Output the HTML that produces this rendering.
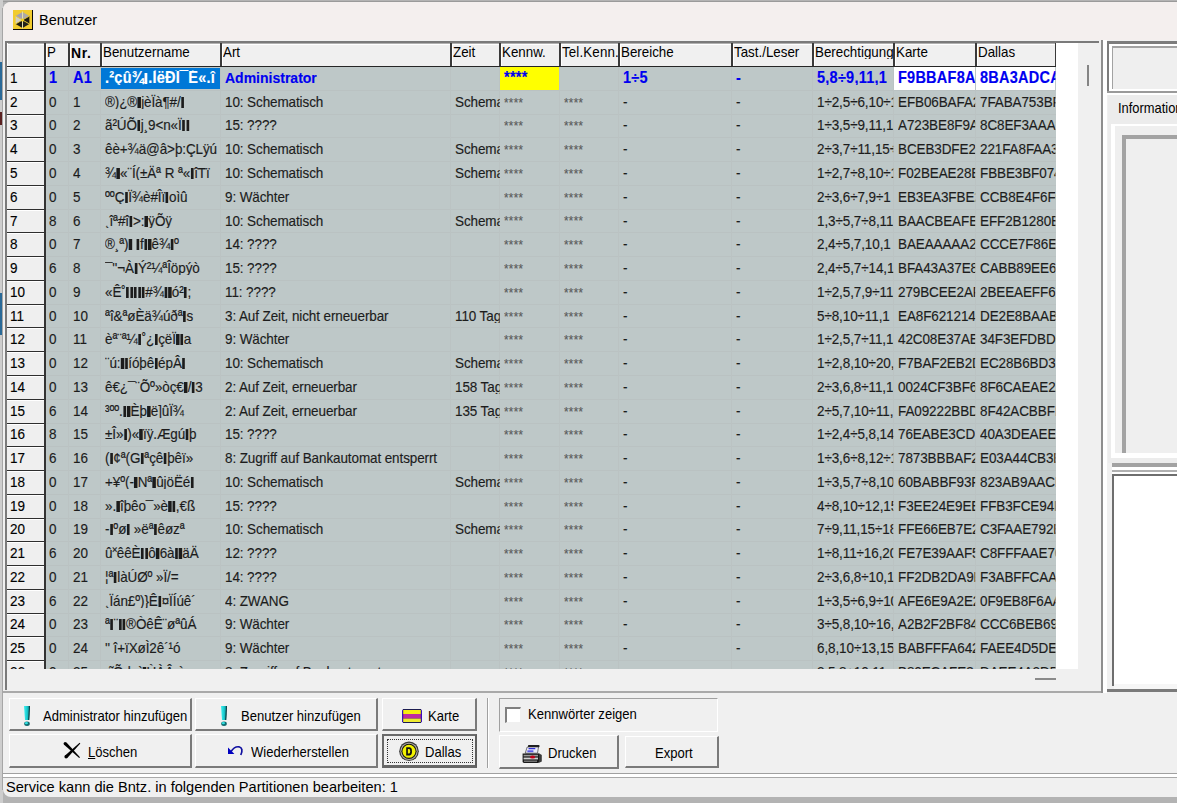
<!DOCTYPE html>
<html><head><meta charset="utf-8"><title>Benutzer</title><style>*{margin:0;padding:0;box-sizing:content-box}
html,body{width:1177px;height:803px;overflow:hidden;background:#b3b3b3}
body{position:relative;font-family:"Liberation Sans", sans-serif}
body div{position:absolute}
.t{white-space:nowrap}
.d{-webkit-text-stroke:0.15px currentColor}
i.b{display:inline-block;width:3.3px;height:11px;background:currentColor;vertical-align:-1px;margin:0 0.6px}
</style></head><body>
<div style="left:0px;top:0px;width:1177px;height:803px;background:#b3b3b3;"></div>
<div style="left:0px;top:1px;width:1177px;height:1px;background:#9a9a9a;"></div>
<div style="left:0px;top:0px;width:3px;height:803px;background:#cdcdcd;"></div>
<div style="left:0px;top:62px;width:3px;height:38px;background:#2a6a98;"></div>
<div style="left:0px;top:112px;width:3px;height:13px;background:#5a2020;"></div>
<div style="left:0px;top:293px;width:3px;height:42px;background:#2a6a98;"></div>
<div style="left:3px;top:2px;width:1200px;height:795px;background:#f0f0f0;border-radius:8px 0 0 8px;overflow:hidden;">
<div style="position:absolute;left:0;top:0;width:1200px;height:38px;background:#f4efee;"></div>
</div>
<div style="left:2px;top:8px;width:1px;height:782px;background:#a6a6a6;"></div>
<svg style="position:absolute;left:13px;top:10px" width="20" height="20" viewBox="0 0 20 20">
<rect x="0" y="0" width="19" height="19" fill="#f2cc2e"/>
<rect x="19" y="0" width="1" height="20" fill="#0a0a0a"/>
<rect x="0" y="19" width="20" height="1" fill="#0a0a0a"/>
<polygon points="9.5,10 9.5,2 2.6,6" fill="#a6a2b2"/>
<polygon points="9.5,10 9.5,2 16.4,6" fill="#aeaaa8"/>
<polygon points="9.5,10 2.6,6 2.6,14" fill="#d4d0c0"/>
<polygon points="9.5,10 16.4,6 16.4,14" fill="#1e1c14"/>
<polygon points="9.5,10 2.6,14 9.5,18" fill="#1a1a14"/>
<polygon points="9.5,10 16.4,14 9.5,18" fill="#22221a"/>
<line x1="9.5" y1="1.5" x2="9.5" y2="18.5" stroke="#e6e0a8" stroke-width="1"/>
<line x1="2.5" y1="14" x2="16.5" y2="6" stroke="#e8c838" stroke-width="0.9"/>
<line x1="2.5" y1="6" x2="16.5" y2="14" stroke="#e8c838" stroke-width="0.9"/>
<circle cx="9.5" cy="10" r="1.6" fill="#f4d020"/>
</svg>
<div class="t" style="left:39px;top:13.13px;font-size:14.5px;line-height:14.5px;color:#000;">Benutzer</div>
<div style="left:5px;top:41px;width:1094px;height:2px;background:#7a7a7a;"></div>
<div style="left:5px;top:41px;width:2px;height:649px;background:#7a7a7a;"></div>
<div style="left:7px;top:43px;width:1091px;height:646px;background:#f0f0f0;"></div>
<div style="left:3px;top:691px;width:1100px;height:2px;background:#a9a9a9;"></div>
<div style="left:1101px;top:40px;width:2px;height:653px;background:#8e8e8e;"></div>
<div style="left:1103px;top:40px;width:4px;height:653px;background:#ffffff;"></div>
<div style="left:7px;top:43px;width:1049px;height:1px;background:#b0b0b0;"></div>
<div style="left:7px;top:44px;width:1049px;height:1px;background:#ffffff;"></div>
<div style="left:7px;top:43px;width:1px;height:23px;background:#ffffff;"></div>
<div style="left:44px;top:43px;width:2px;height:23px;background:#3a3a3a;"></div>
<div style="left:46px;top:44px;width:1px;height:22px;background:#ffffff;"></div>
<div style="left:68px;top:43px;width:2px;height:23px;background:#3a3a3a;"></div>
<div style="left:70px;top:44px;width:1px;height:22px;background:#ffffff;"></div>
<div style="left:100px;top:43px;width:2px;height:23px;background:#3a3a3a;"></div>
<div style="left:102px;top:44px;width:1px;height:22px;background:#ffffff;"></div>
<div style="left:220px;top:43px;width:2px;height:23px;background:#3a3a3a;"></div>
<div style="left:222px;top:44px;width:1px;height:22px;background:#ffffff;"></div>
<div style="left:450px;top:43px;width:2px;height:23px;background:#3a3a3a;"></div>
<div style="left:452px;top:44px;width:1px;height:22px;background:#ffffff;"></div>
<div style="left:499px;top:43px;width:2px;height:23px;background:#3a3a3a;"></div>
<div style="left:501px;top:44px;width:1px;height:22px;background:#ffffff;"></div>
<div style="left:559px;top:43px;width:2px;height:23px;background:#3a3a3a;"></div>
<div style="left:561px;top:44px;width:1px;height:22px;background:#ffffff;"></div>
<div style="left:618px;top:43px;width:2px;height:23px;background:#3a3a3a;"></div>
<div style="left:620px;top:44px;width:1px;height:22px;background:#ffffff;"></div>
<div style="left:731px;top:43px;width:2px;height:23px;background:#3a3a3a;"></div>
<div style="left:733px;top:44px;width:1px;height:22px;background:#ffffff;"></div>
<div style="left:812px;top:43px;width:2px;height:23px;background:#3a3a3a;"></div>
<div style="left:814px;top:44px;width:1px;height:22px;background:#ffffff;"></div>
<div style="left:893px;top:43px;width:2px;height:23px;background:#3a3a3a;"></div>
<div style="left:895px;top:44px;width:1px;height:22px;background:#ffffff;"></div>
<div style="left:975px;top:43px;width:2px;height:23px;background:#3a3a3a;"></div>
<div style="left:977px;top:44px;width:1px;height:22px;background:#ffffff;"></div>
<div style="left:1055px;top:43px;width:2px;height:23px;background:#3a3a3a;"></div>
<div style="left:1057px;top:44px;width:1px;height:22px;background:#ffffff;"></div>
<div class="t" style="left:46.5px;top:44.93px;font-size:14.5px;line-height:14.5px;color:#000;width:22.82608695652174px;overflow:hidden;transform:scaleX(0.92);transform-origin:0 0;">P</div>
<div class="t" style="left:71px;top:45.85px;font-size:14px;line-height:14px;color:#000;width:29px;overflow:hidden;font-weight:bold;letter-spacing:0.6px;">Nr.</div>
<div class="t" style="left:102.5px;top:44.93px;font-size:14.5px;line-height:14.5px;color:#000;width:127.17391304347825px;overflow:hidden;transform:scaleX(0.92);transform-origin:0 0;">Benutzername</div>
<div class="t" style="left:222.5px;top:44.93px;font-size:14.5px;line-height:14.5px;color:#000;width:246.7391304347826px;overflow:hidden;transform:scaleX(0.92);transform-origin:0 0;">Art</div>
<div class="t" style="left:452.5px;top:44.93px;font-size:14.5px;line-height:14.5px;color:#000;width:50.0px;overflow:hidden;transform:scaleX(0.92);transform-origin:0 0;">Zeit</div>
<div class="t" style="left:501.5px;top:44.93px;font-size:14.5px;line-height:14.5px;color:#000;width:61.95652173913043px;overflow:hidden;transform:scaleX(0.92);transform-origin:0 0;">Kennw.</div>
<div class="t" style="left:561.5px;top:44.93px;font-size:14.5px;line-height:14.5px;color:#000;letter-spacing:0.15px;transform:scaleX(0.92);transform-origin:0 0;">Tel.Kenn.</div>
<div class="t" style="left:620.5px;top:44.93px;font-size:14.5px;line-height:14.5px;color:#000;width:119.56521739130434px;overflow:hidden;transform:scaleX(0.92);transform-origin:0 0;">Bereiche</div>
<div class="t" style="left:733.5px;top:44.93px;font-size:14.5px;line-height:14.5px;color:#000;width:84.78260869565217px;overflow:hidden;transform:scaleX(0.92);transform-origin:0 0;">Tast./Leser</div>
<div class="t" style="left:814.5px;top:44.93px;font-size:14.5px;line-height:14.5px;color:#000;width:88.04347826086956px;overflow:hidden;transform:scaleX(0.92);transform-origin:0 0;">Berechtigung</div>
<div class="t" style="left:895.5px;top:44.93px;font-size:14.5px;line-height:14.5px;color:#000;width:85.8695652173913px;overflow:hidden;transform:scaleX(0.92);transform-origin:0 0;">Karte</div>
<div class="t" style="left:977.5px;top:44.93px;font-size:14.5px;line-height:14.5px;color:#000;width:83.69565217391305px;overflow:hidden;transform:scaleX(0.92);transform-origin:0 0;">Dallas</div>
<div style="left:7px;top:66px;width:1049px;height:1px;background:#262626;"></div>
<div style="left:46px;top:67px;width:1010px;height:602px;background:#bec8c8;"></div>
<div style="left:46px;top:90px;width:1010px;height:1px;background:#bac2c2;"></div>
<div style="left:46px;top:114px;width:1010px;height:1px;background:#bac2c2;"></div>
<div style="left:46px;top:137px;width:1010px;height:1px;background:#bac2c2;"></div>
<div style="left:46px;top:161px;width:1010px;height:1px;background:#bac2c2;"></div>
<div style="left:46px;top:185px;width:1010px;height:1px;background:#bac2c2;"></div>
<div style="left:46px;top:209px;width:1010px;height:1px;background:#bac2c2;"></div>
<div style="left:46px;top:232px;width:1010px;height:1px;background:#bac2c2;"></div>
<div style="left:46px;top:256px;width:1010px;height:1px;background:#bac2c2;"></div>
<div style="left:46px;top:280px;width:1010px;height:1px;background:#bac2c2;"></div>
<div style="left:46px;top:304px;width:1010px;height:1px;background:#bac2c2;"></div>
<div style="left:46px;top:327px;width:1010px;height:1px;background:#bac2c2;"></div>
<div style="left:46px;top:351px;width:1010px;height:1px;background:#bac2c2;"></div>
<div style="left:46px;top:375px;width:1010px;height:1px;background:#bac2c2;"></div>
<div style="left:46px;top:399px;width:1010px;height:1px;background:#bac2c2;"></div>
<div style="left:46px;top:423px;width:1010px;height:1px;background:#bac2c2;"></div>
<div style="left:46px;top:446px;width:1010px;height:1px;background:#bac2c2;"></div>
<div style="left:46px;top:470px;width:1010px;height:1px;background:#bac2c2;"></div>
<div style="left:46px;top:494px;width:1010px;height:1px;background:#bac2c2;"></div>
<div style="left:46px;top:518px;width:1010px;height:1px;background:#bac2c2;"></div>
<div style="left:46px;top:541px;width:1010px;height:1px;background:#bac2c2;"></div>
<div style="left:46px;top:565px;width:1010px;height:1px;background:#bac2c2;"></div>
<div style="left:46px;top:589px;width:1010px;height:1px;background:#bac2c2;"></div>
<div style="left:46px;top:613px;width:1010px;height:1px;background:#bac2c2;"></div>
<div style="left:46px;top:636px;width:1010px;height:1px;background:#bac2c2;"></div>
<div style="left:46px;top:660px;width:1010px;height:1px;background:#bac2c2;"></div>
<div style="left:68px;top:67px;width:1px;height:602px;background:#bbc3c3;"></div>
<div style="left:100px;top:67px;width:1px;height:602px;background:#bbc3c3;"></div>
<div style="left:220px;top:67px;width:1px;height:602px;background:#bbc3c3;"></div>
<div style="left:450px;top:67px;width:1px;height:602px;background:#bbc3c3;"></div>
<div style="left:499px;top:67px;width:1px;height:602px;background:#bbc3c3;"></div>
<div style="left:559px;top:67px;width:1px;height:602px;background:#bbc3c3;"></div>
<div style="left:618px;top:67px;width:1px;height:602px;background:#bbc3c3;"></div>
<div style="left:731px;top:67px;width:1px;height:602px;background:#bbc3c3;"></div>
<div style="left:812px;top:67px;width:1px;height:602px;background:#bbc3c3;"></div>
<div style="left:893px;top:67px;width:1px;height:602px;background:#bbc3c3;"></div>
<div style="left:975px;top:67px;width:1px;height:602px;background:#bbc3c3;"></div>
<div style="left:1056px;top:43px;width:22px;height:626px;background:#ffffff;"></div>
<div style="left:1078px;top:43px;width:20px;height:646px;background:#f0f0f0;"></div>
<div style="left:1087px;top:65px;width:2px;height:21px;background:#858585;"></div>
<div style="left:1035px;top:678px;width:21px;height:2px;background:#8a8a8a;"></div>
<div style="left:7px;top:67px;width:37px;height:23px;background:#efefef;"></div>
<div style="left:7px;top:67px;width:37px;height:1px;background:#ffffff;"></div>
<div style="left:7px;top:90px;width:37px;height:1px;background:#2e2e2e;"></div>
<div style="left:7px;top:91px;width:37px;height:0px;background:#777;"></div>
<div style="left:7px;top:91px;width:37px;height:23px;background:#efefef;"></div>
<div style="left:7px;top:91px;width:37px;height:1px;background:#ffffff;"></div>
<div style="left:7px;top:114px;width:37px;height:1px;background:#2e2e2e;"></div>
<div style="left:7px;top:115px;width:37px;height:0px;background:#777;"></div>
<div style="left:7px;top:115px;width:37px;height:22px;background:#efefef;"></div>
<div style="left:7px;top:115px;width:37px;height:1px;background:#ffffff;"></div>
<div style="left:7px;top:137px;width:37px;height:1px;background:#2e2e2e;"></div>
<div style="left:7px;top:138px;width:37px;height:0px;background:#777;"></div>
<div style="left:7px;top:138px;width:37px;height:23px;background:#efefef;"></div>
<div style="left:7px;top:138px;width:37px;height:1px;background:#ffffff;"></div>
<div style="left:7px;top:161px;width:37px;height:1px;background:#2e2e2e;"></div>
<div style="left:7px;top:162px;width:37px;height:0px;background:#777;"></div>
<div style="left:7px;top:162px;width:37px;height:23px;background:#efefef;"></div>
<div style="left:7px;top:162px;width:37px;height:1px;background:#ffffff;"></div>
<div style="left:7px;top:185px;width:37px;height:1px;background:#2e2e2e;"></div>
<div style="left:7px;top:186px;width:37px;height:0px;background:#777;"></div>
<div style="left:7px;top:186px;width:37px;height:23px;background:#efefef;"></div>
<div style="left:7px;top:186px;width:37px;height:1px;background:#ffffff;"></div>
<div style="left:7px;top:209px;width:37px;height:1px;background:#2e2e2e;"></div>
<div style="left:7px;top:210px;width:37px;height:0px;background:#777;"></div>
<div style="left:7px;top:210px;width:37px;height:22px;background:#efefef;"></div>
<div style="left:7px;top:210px;width:37px;height:1px;background:#ffffff;"></div>
<div style="left:7px;top:232px;width:37px;height:1px;background:#2e2e2e;"></div>
<div style="left:7px;top:233px;width:37px;height:0px;background:#777;"></div>
<div style="left:7px;top:233px;width:37px;height:23px;background:#efefef;"></div>
<div style="left:7px;top:233px;width:37px;height:1px;background:#ffffff;"></div>
<div style="left:7px;top:256px;width:37px;height:1px;background:#2e2e2e;"></div>
<div style="left:7px;top:257px;width:37px;height:0px;background:#777;"></div>
<div style="left:7px;top:257px;width:37px;height:23px;background:#efefef;"></div>
<div style="left:7px;top:257px;width:37px;height:1px;background:#ffffff;"></div>
<div style="left:7px;top:280px;width:37px;height:1px;background:#2e2e2e;"></div>
<div style="left:7px;top:281px;width:37px;height:0px;background:#777;"></div>
<div style="left:7px;top:281px;width:37px;height:23px;background:#efefef;"></div>
<div style="left:7px;top:281px;width:37px;height:1px;background:#ffffff;"></div>
<div style="left:7px;top:304px;width:37px;height:1px;background:#2e2e2e;"></div>
<div style="left:7px;top:305px;width:37px;height:0px;background:#777;"></div>
<div style="left:7px;top:305px;width:37px;height:22px;background:#efefef;"></div>
<div style="left:7px;top:305px;width:37px;height:1px;background:#ffffff;"></div>
<div style="left:7px;top:327px;width:37px;height:1px;background:#2e2e2e;"></div>
<div style="left:7px;top:328px;width:37px;height:0px;background:#777;"></div>
<div style="left:7px;top:328px;width:37px;height:23px;background:#efefef;"></div>
<div style="left:7px;top:328px;width:37px;height:1px;background:#ffffff;"></div>
<div style="left:7px;top:351px;width:37px;height:1px;background:#2e2e2e;"></div>
<div style="left:7px;top:352px;width:37px;height:0px;background:#777;"></div>
<div style="left:7px;top:352px;width:37px;height:23px;background:#efefef;"></div>
<div style="left:7px;top:352px;width:37px;height:1px;background:#ffffff;"></div>
<div style="left:7px;top:375px;width:37px;height:1px;background:#2e2e2e;"></div>
<div style="left:7px;top:376px;width:37px;height:0px;background:#777;"></div>
<div style="left:7px;top:376px;width:37px;height:23px;background:#efefef;"></div>
<div style="left:7px;top:376px;width:37px;height:1px;background:#ffffff;"></div>
<div style="left:7px;top:399px;width:37px;height:1px;background:#2e2e2e;"></div>
<div style="left:7px;top:400px;width:37px;height:0px;background:#777;"></div>
<div style="left:7px;top:400px;width:37px;height:23px;background:#efefef;"></div>
<div style="left:7px;top:400px;width:37px;height:1px;background:#ffffff;"></div>
<div style="left:7px;top:423px;width:37px;height:1px;background:#2e2e2e;"></div>
<div style="left:7px;top:424px;width:37px;height:0px;background:#777;"></div>
<div style="left:7px;top:424px;width:37px;height:22px;background:#efefef;"></div>
<div style="left:7px;top:424px;width:37px;height:1px;background:#ffffff;"></div>
<div style="left:7px;top:446px;width:37px;height:1px;background:#2e2e2e;"></div>
<div style="left:7px;top:447px;width:37px;height:0px;background:#777;"></div>
<div style="left:7px;top:447px;width:37px;height:23px;background:#efefef;"></div>
<div style="left:7px;top:447px;width:37px;height:1px;background:#ffffff;"></div>
<div style="left:7px;top:470px;width:37px;height:1px;background:#2e2e2e;"></div>
<div style="left:7px;top:471px;width:37px;height:0px;background:#777;"></div>
<div style="left:7px;top:471px;width:37px;height:23px;background:#efefef;"></div>
<div style="left:7px;top:471px;width:37px;height:1px;background:#ffffff;"></div>
<div style="left:7px;top:494px;width:37px;height:1px;background:#2e2e2e;"></div>
<div style="left:7px;top:495px;width:37px;height:0px;background:#777;"></div>
<div style="left:7px;top:495px;width:37px;height:23px;background:#efefef;"></div>
<div style="left:7px;top:495px;width:37px;height:1px;background:#ffffff;"></div>
<div style="left:7px;top:518px;width:37px;height:1px;background:#2e2e2e;"></div>
<div style="left:7px;top:519px;width:37px;height:0px;background:#777;"></div>
<div style="left:7px;top:519px;width:37px;height:22px;background:#efefef;"></div>
<div style="left:7px;top:519px;width:37px;height:1px;background:#ffffff;"></div>
<div style="left:7px;top:541px;width:37px;height:1px;background:#2e2e2e;"></div>
<div style="left:7px;top:542px;width:37px;height:0px;background:#777;"></div>
<div style="left:7px;top:542px;width:37px;height:23px;background:#efefef;"></div>
<div style="left:7px;top:542px;width:37px;height:1px;background:#ffffff;"></div>
<div style="left:7px;top:565px;width:37px;height:1px;background:#2e2e2e;"></div>
<div style="left:7px;top:566px;width:37px;height:0px;background:#777;"></div>
<div style="left:7px;top:566px;width:37px;height:23px;background:#efefef;"></div>
<div style="left:7px;top:566px;width:37px;height:1px;background:#ffffff;"></div>
<div style="left:7px;top:589px;width:37px;height:1px;background:#2e2e2e;"></div>
<div style="left:7px;top:590px;width:37px;height:0px;background:#777;"></div>
<div style="left:7px;top:590px;width:37px;height:23px;background:#efefef;"></div>
<div style="left:7px;top:590px;width:37px;height:1px;background:#ffffff;"></div>
<div style="left:7px;top:613px;width:37px;height:1px;background:#2e2e2e;"></div>
<div style="left:7px;top:614px;width:37px;height:0px;background:#777;"></div>
<div style="left:7px;top:614px;width:37px;height:22px;background:#efefef;"></div>
<div style="left:7px;top:614px;width:37px;height:1px;background:#ffffff;"></div>
<div style="left:7px;top:636px;width:37px;height:1px;background:#2e2e2e;"></div>
<div style="left:7px;top:637px;width:37px;height:0px;background:#777;"></div>
<div style="left:7px;top:637px;width:37px;height:23px;background:#efefef;"></div>
<div style="left:7px;top:637px;width:37px;height:1px;background:#ffffff;"></div>
<div style="left:7px;top:660px;width:37px;height:1px;background:#2e2e2e;"></div>
<div style="left:7px;top:661px;width:37px;height:0px;background:#777;"></div>
<div style="left:7px;top:661px;width:37px;height:8px;background:#efefef;"></div>
<div style="left:7px;top:661px;width:37px;height:1px;background:#ffffff;"></div>
<div style="left:44px;top:67px;width:2px;height:602px;background:#333333;"></div>
<div style="left:7px;top:67px;width:1049px;height:602px;overflow:hidden;">
<div style="left:94px;top:1px;width:119px;height:21px;background:#0078d7;"></div>
<div style="left:493px;top:0px;width:59px;height:23px;background:#ffff00;"></div>
<div style="left:887px;top:0px;width:81px;height:23px;background:#ffffff;"></div>
<div style="left:969px;top:0px;width:79px;height:23px;background:#ffffff;"></div>
<div class="t d" style="left:3px;top:2.97px;font-size:15.39px;line-height:15.39px;color:#000;letter-spacing:-0.114px;transform:scaleX(0.877);transform-origin:0 0;">1</div>
<div class="t d" style="left:41.5px;top:2.66px;font-size:15.76px;line-height:15.76px;color:#0000f0;width:21.20px;overflow:hidden;letter-spacing:0.272px;transform:scaleX(0.92);transform-origin:0 0;font-weight:bold;">1</div>
<div class="t d" style="left:65.5px;top:2.66px;font-size:15.76px;line-height:15.76px;color:#0000f0;width:29.89px;overflow:hidden;letter-spacing:0.272px;transform:scaleX(0.92);transform-origin:0 0;font-weight:bold;">A1</div>
<div class="t d" style="left:97.5px;top:2.66px;font-size:15.76px;line-height:15.76px;color:#ffffff;width:125.54px;overflow:hidden;letter-spacing:0.272px;transform:scaleX(0.92);transform-origin:0 0;font-weight:bold;">.²çû¾<i class="b"></i>.ÌëÐÎ¯É«.î</div>
<div class="t d" style="left:217.5px;top:3.12px;font-size:15.22px;line-height:15.22px;color:#0000f0;width:245.11px;overflow:hidden;letter-spacing:0.000px;transform:scaleX(0.92);transform-origin:0 0;font-weight:bold;">Administrator</div>
<div class="t d" style="left:496.5px;top:2.66px;font-size:15.76px;line-height:15.76px;color:#0000f0;width:60.33px;overflow:hidden;letter-spacing:0.272px;transform:scaleX(0.92);transform-origin:0 0;font-weight:bold;">****</div>
<div class="t d" style="left:615.5px;top:2.66px;font-size:15.76px;line-height:15.76px;color:#0000f0;width:117.93px;overflow:hidden;letter-spacing:0.272px;transform:scaleX(0.92);transform-origin:0 0;font-weight:bold;">1÷5</div>
<div class="t d" style="left:728.5px;top:2.66px;font-size:15.76px;line-height:15.76px;color:#0000f0;width:83.15px;overflow:hidden;letter-spacing:0.272px;transform:scaleX(0.92);transform-origin:0 0;font-weight:bold;">-</div>
<div class="t d" style="left:809.5px;top:2.66px;font-size:15.76px;line-height:15.76px;color:#0000f0;width:83.15px;overflow:hidden;letter-spacing:0.272px;transform:scaleX(0.92);transform-origin:0 0;font-weight:bold;">5,8÷9,11,1</div>
<div class="t d" style="left:890.5px;top:2.66px;font-size:15.76px;line-height:15.76px;color:#0000f0;width:84.24px;overflow:hidden;letter-spacing:0.272px;transform:scaleX(0.92);transform-origin:0 0;font-weight:bold;">F9BBAF8A</div>
<div class="t d" style="left:972.5px;top:2.66px;font-size:15.76px;line-height:15.76px;color:#0000f0;width:82.07px;overflow:hidden;letter-spacing:0.272px;transform:scaleX(0.92);transform-origin:0 0;font-weight:bold;">8BA3ADCA</div>
<div class="t d" style="left:3px;top:26.73px;font-size:15.39px;line-height:15.39px;color:#000;letter-spacing:-0.114px;transform:scaleX(0.877);transform-origin:0 0;">2</div>
<div class="t d" style="left:41.5px;top:26.73px;font-size:15.39px;line-height:15.39px;color:#1c1c1c;width:22.23px;overflow:hidden;letter-spacing:-0.114px;transform:scaleX(0.877);transform-origin:0 0;">0</div>
<div class="t d" style="left:65.5px;top:26.73px;font-size:15.39px;line-height:15.39px;color:#1c1c1c;width:31.36px;overflow:hidden;letter-spacing:-0.114px;transform:scaleX(0.877);transform-origin:0 0;">1</div>
<div class="t d" style="left:97.5px;top:26.73px;font-size:15.39px;line-height:15.39px;color:#1c1c1c;width:131.70px;overflow:hidden;letter-spacing:-0.114px;transform:scaleX(0.877);transform-origin:0 0;">®)¿®<i class="b"></i>jèÏà¶#/<i class="b"></i></div>
<div class="t d" style="left:217.5px;top:26.73px;font-size:15.39px;line-height:15.39px;color:#1c1c1c;width:257.13px;overflow:hidden;letter-spacing:-0.114px;transform:scaleX(0.877);transform-origin:0 0;">10: Schematisch</div>
<div class="t d" style="left:447.5px;top:26.73px;font-size:15.39px;line-height:15.39px;color:#1c1c1c;width:50.74px;overflow:hidden;letter-spacing:-0.114px;transform:scaleX(0.877);transform-origin:0 0;">Schema</div>
<div class="t d" style="left:496.5px;top:28.66px;font-size:13.11px;line-height:13.11px;color:#5a5a5a;width:63.28px;overflow:hidden;letter-spacing:0.456px;transform:scaleX(0.877);transform-origin:0 0;">****</div>
<div class="t d" style="left:556.5px;top:28.66px;font-size:13.11px;line-height:13.11px;color:#5a5a5a;width:62.14px;overflow:hidden;letter-spacing:0.456px;transform:scaleX(0.877);transform-origin:0 0;">****</div>
<div class="t d" style="left:615.5px;top:26.73px;font-size:15.39px;line-height:15.39px;color:#1c1c1c;width:123.72px;overflow:hidden;letter-spacing:-0.114px;transform:scaleX(0.877);transform-origin:0 0;">-</div>
<div class="t d" style="left:728.5px;top:26.73px;font-size:15.39px;line-height:15.39px;color:#1c1c1c;width:87.23px;overflow:hidden;letter-spacing:-0.114px;transform:scaleX(0.877);transform-origin:0 0;">-</div>
<div class="t d" style="left:809.5px;top:26.73px;font-size:15.39px;line-height:15.39px;color:#1c1c1c;width:87.23px;overflow:hidden;letter-spacing:-0.114px;transform:scaleX(0.877);transform-origin:0 0;">1÷2,5÷6,10÷1</div>
<div class="t d" style="left:890.5px;top:26.73px;font-size:15.39px;line-height:15.39px;color:#1c1c1c;width:88.37px;overflow:hidden;letter-spacing:-0.114px;transform:scaleX(0.877);transform-origin:0 0;">EFB06BAFA2</div>
<div class="t d" style="left:972.5px;top:26.73px;font-size:15.39px;line-height:15.39px;color:#1c1c1c;width:86.09px;overflow:hidden;letter-spacing:-0.114px;transform:scaleX(0.877);transform-origin:0 0;">7FABA753BF</div>
<div class="t d" style="left:3px;top:50.49px;font-size:15.39px;line-height:15.39px;color:#000;letter-spacing:-0.114px;transform:scaleX(0.877);transform-origin:0 0;">3</div>
<div class="t d" style="left:41.5px;top:50.49px;font-size:15.39px;line-height:15.39px;color:#1c1c1c;width:22.23px;overflow:hidden;letter-spacing:-0.114px;transform:scaleX(0.877);transform-origin:0 0;">0</div>
<div class="t d" style="left:65.5px;top:50.49px;font-size:15.39px;line-height:15.39px;color:#1c1c1c;width:31.36px;overflow:hidden;letter-spacing:-0.114px;transform:scaleX(0.877);transform-origin:0 0;">2</div>
<div class="t d" style="left:97.5px;top:50.49px;font-size:15.39px;line-height:15.39px;color:#1c1c1c;width:131.70px;overflow:hidden;letter-spacing:-0.114px;transform:scaleX(0.877);transform-origin:0 0;">ã²ÚÕ<i class="b"></i>j¸9&lt;n«Ï<i class="b"></i><i class="b"></i></div>
<div class="t d" style="left:217.5px;top:50.49px;font-size:15.39px;line-height:15.39px;color:#1c1c1c;width:257.13px;overflow:hidden;letter-spacing:-0.114px;transform:scaleX(0.877);transform-origin:0 0;">15: ????</div>
<div class="t d" style="left:496.5px;top:52.42px;font-size:13.11px;line-height:13.11px;color:#5a5a5a;width:63.28px;overflow:hidden;letter-spacing:0.456px;transform:scaleX(0.877);transform-origin:0 0;">****</div>
<div class="t d" style="left:556.5px;top:52.42px;font-size:13.11px;line-height:13.11px;color:#5a5a5a;width:62.14px;overflow:hidden;letter-spacing:0.456px;transform:scaleX(0.877);transform-origin:0 0;">****</div>
<div class="t d" style="left:615.5px;top:50.49px;font-size:15.39px;line-height:15.39px;color:#1c1c1c;width:123.72px;overflow:hidden;letter-spacing:-0.114px;transform:scaleX(0.877);transform-origin:0 0;">-</div>
<div class="t d" style="left:728.5px;top:50.49px;font-size:15.39px;line-height:15.39px;color:#1c1c1c;width:87.23px;overflow:hidden;letter-spacing:-0.114px;transform:scaleX(0.877);transform-origin:0 0;">-</div>
<div class="t d" style="left:809.5px;top:50.49px;font-size:15.39px;line-height:15.39px;color:#1c1c1c;width:87.23px;overflow:hidden;letter-spacing:-0.114px;transform:scaleX(0.877);transform-origin:0 0;">1÷3,5÷9,11,1</div>
<div class="t d" style="left:890.5px;top:50.49px;font-size:15.39px;line-height:15.39px;color:#1c1c1c;width:88.37px;overflow:hidden;letter-spacing:-0.114px;transform:scaleX(0.877);transform-origin:0 0;">A723BE8F9A</div>
<div class="t d" style="left:972.5px;top:50.49px;font-size:15.39px;line-height:15.39px;color:#1c1c1c;width:86.09px;overflow:hidden;letter-spacing:-0.114px;transform:scaleX(0.877);transform-origin:0 0;">8C8EF3AAA2</div>
<div class="t d" style="left:3px;top:74.25px;font-size:15.39px;line-height:15.39px;color:#000;letter-spacing:-0.114px;transform:scaleX(0.877);transform-origin:0 0;">4</div>
<div class="t d" style="left:41.5px;top:74.25px;font-size:15.39px;line-height:15.39px;color:#1c1c1c;width:22.23px;overflow:hidden;letter-spacing:-0.114px;transform:scaleX(0.877);transform-origin:0 0;">0</div>
<div class="t d" style="left:65.5px;top:74.25px;font-size:15.39px;line-height:15.39px;color:#1c1c1c;width:31.36px;overflow:hidden;letter-spacing:-0.114px;transform:scaleX(0.877);transform-origin:0 0;">3</div>
<div class="t d" style="left:97.5px;top:74.25px;font-size:15.39px;line-height:15.39px;color:#1c1c1c;width:131.70px;overflow:hidden;letter-spacing:-0.114px;transform:scaleX(0.877);transform-origin:0 0;">êè+¾ä@â&gt;þ:ÇLÿú</div>
<div class="t d" style="left:217.5px;top:74.25px;font-size:15.39px;line-height:15.39px;color:#1c1c1c;width:257.13px;overflow:hidden;letter-spacing:-0.114px;transform:scaleX(0.877);transform-origin:0 0;">10: Schematisch</div>
<div class="t d" style="left:447.5px;top:74.25px;font-size:15.39px;line-height:15.39px;color:#1c1c1c;width:50.74px;overflow:hidden;letter-spacing:-0.114px;transform:scaleX(0.877);transform-origin:0 0;">Schema</div>
<div class="t d" style="left:496.5px;top:76.18px;font-size:13.11px;line-height:13.11px;color:#5a5a5a;width:63.28px;overflow:hidden;letter-spacing:0.456px;transform:scaleX(0.877);transform-origin:0 0;">****</div>
<div class="t d" style="left:556.5px;top:76.18px;font-size:13.11px;line-height:13.11px;color:#5a5a5a;width:62.14px;overflow:hidden;letter-spacing:0.456px;transform:scaleX(0.877);transform-origin:0 0;">****</div>
<div class="t d" style="left:615.5px;top:74.25px;font-size:15.39px;line-height:15.39px;color:#1c1c1c;width:123.72px;overflow:hidden;letter-spacing:-0.114px;transform:scaleX(0.877);transform-origin:0 0;">-</div>
<div class="t d" style="left:728.5px;top:74.25px;font-size:15.39px;line-height:15.39px;color:#1c1c1c;width:87.23px;overflow:hidden;letter-spacing:-0.114px;transform:scaleX(0.877);transform-origin:0 0;">-</div>
<div class="t d" style="left:809.5px;top:74.25px;font-size:15.39px;line-height:15.39px;color:#1c1c1c;width:87.23px;overflow:hidden;letter-spacing:-0.114px;transform:scaleX(0.877);transform-origin:0 0;">2÷3,7÷11,15÷</div>
<div class="t d" style="left:890.5px;top:74.25px;font-size:15.39px;line-height:15.39px;color:#1c1c1c;width:88.37px;overflow:hidden;letter-spacing:-0.114px;transform:scaleX(0.877);transform-origin:0 0;">BCEB3DFE2</div>
<div class="t d" style="left:972.5px;top:74.25px;font-size:15.39px;line-height:15.39px;color:#1c1c1c;width:86.09px;overflow:hidden;letter-spacing:-0.114px;transform:scaleX(0.877);transform-origin:0 0;">221FA8FAA3</div>
<div class="t d" style="left:3px;top:98.01px;font-size:15.39px;line-height:15.39px;color:#000;letter-spacing:-0.114px;transform:scaleX(0.877);transform-origin:0 0;">5</div>
<div class="t d" style="left:41.5px;top:98.01px;font-size:15.39px;line-height:15.39px;color:#1c1c1c;width:22.23px;overflow:hidden;letter-spacing:-0.114px;transform:scaleX(0.877);transform-origin:0 0;">0</div>
<div class="t d" style="left:65.5px;top:98.01px;font-size:15.39px;line-height:15.39px;color:#1c1c1c;width:31.36px;overflow:hidden;letter-spacing:-0.114px;transform:scaleX(0.877);transform-origin:0 0;">4</div>
<div class="t d" style="left:97.5px;top:98.01px;font-size:15.39px;line-height:15.39px;color:#1c1c1c;width:131.70px;overflow:hidden;letter-spacing:-0.114px;transform:scaleX(0.877);transform-origin:0 0;">¾<i class="b"></i>«¨Í(±Äª R ª«<i class="b"></i>îTï</div>
<div class="t d" style="left:217.5px;top:98.01px;font-size:15.39px;line-height:15.39px;color:#1c1c1c;width:257.13px;overflow:hidden;letter-spacing:-0.114px;transform:scaleX(0.877);transform-origin:0 0;">10: Schematisch</div>
<div class="t d" style="left:447.5px;top:98.01px;font-size:15.39px;line-height:15.39px;color:#1c1c1c;width:50.74px;overflow:hidden;letter-spacing:-0.114px;transform:scaleX(0.877);transform-origin:0 0;">Schema</div>
<div class="t d" style="left:496.5px;top:99.94px;font-size:13.11px;line-height:13.11px;color:#5a5a5a;width:63.28px;overflow:hidden;letter-spacing:0.456px;transform:scaleX(0.877);transform-origin:0 0;">****</div>
<div class="t d" style="left:556.5px;top:99.94px;font-size:13.11px;line-height:13.11px;color:#5a5a5a;width:62.14px;overflow:hidden;letter-spacing:0.456px;transform:scaleX(0.877);transform-origin:0 0;">****</div>
<div class="t d" style="left:615.5px;top:98.01px;font-size:15.39px;line-height:15.39px;color:#1c1c1c;width:123.72px;overflow:hidden;letter-spacing:-0.114px;transform:scaleX(0.877);transform-origin:0 0;">-</div>
<div class="t d" style="left:728.5px;top:98.01px;font-size:15.39px;line-height:15.39px;color:#1c1c1c;width:87.23px;overflow:hidden;letter-spacing:-0.114px;transform:scaleX(0.877);transform-origin:0 0;">-</div>
<div class="t d" style="left:809.5px;top:98.01px;font-size:15.39px;line-height:15.39px;color:#1c1c1c;width:87.23px;overflow:hidden;letter-spacing:-0.114px;transform:scaleX(0.877);transform-origin:0 0;">1÷2,7÷8,10÷1</div>
<div class="t d" style="left:890.5px;top:98.01px;font-size:15.39px;line-height:15.39px;color:#1c1c1c;width:88.37px;overflow:hidden;letter-spacing:-0.114px;transform:scaleX(0.877);transform-origin:0 0;">F02BEAE28E</div>
<div class="t d" style="left:972.5px;top:98.01px;font-size:15.39px;line-height:15.39px;color:#1c1c1c;width:86.09px;overflow:hidden;letter-spacing:-0.114px;transform:scaleX(0.877);transform-origin:0 0;">FBBE3BF074</div>
<div class="t d" style="left:3px;top:121.77px;font-size:15.39px;line-height:15.39px;color:#000;letter-spacing:-0.114px;transform:scaleX(0.877);transform-origin:0 0;">6</div>
<div class="t d" style="left:41.5px;top:121.77px;font-size:15.39px;line-height:15.39px;color:#1c1c1c;width:22.23px;overflow:hidden;letter-spacing:-0.114px;transform:scaleX(0.877);transform-origin:0 0;">0</div>
<div class="t d" style="left:65.5px;top:121.77px;font-size:15.39px;line-height:15.39px;color:#1c1c1c;width:31.36px;overflow:hidden;letter-spacing:-0.114px;transform:scaleX(0.877);transform-origin:0 0;">5</div>
<div class="t d" style="left:97.5px;top:121.77px;font-size:15.39px;line-height:15.39px;color:#1c1c1c;width:131.70px;overflow:hidden;letter-spacing:-0.114px;transform:scaleX(0.877);transform-origin:0 0;">ººÇ<i class="b"></i>Ï¾è#Îï<i class="b"></i>oìû</div>
<div class="t d" style="left:217.5px;top:121.77px;font-size:15.39px;line-height:15.39px;color:#1c1c1c;width:257.13px;overflow:hidden;letter-spacing:-0.114px;transform:scaleX(0.877);transform-origin:0 0;">9: Wächter</div>
<div class="t d" style="left:496.5px;top:123.70px;font-size:13.11px;line-height:13.11px;color:#5a5a5a;width:63.28px;overflow:hidden;letter-spacing:0.456px;transform:scaleX(0.877);transform-origin:0 0;">****</div>
<div class="t d" style="left:556.5px;top:123.70px;font-size:13.11px;line-height:13.11px;color:#5a5a5a;width:62.14px;overflow:hidden;letter-spacing:0.456px;transform:scaleX(0.877);transform-origin:0 0;">****</div>
<div class="t d" style="left:615.5px;top:121.77px;font-size:15.39px;line-height:15.39px;color:#1c1c1c;width:123.72px;overflow:hidden;letter-spacing:-0.114px;transform:scaleX(0.877);transform-origin:0 0;">-</div>
<div class="t d" style="left:728.5px;top:121.77px;font-size:15.39px;line-height:15.39px;color:#1c1c1c;width:87.23px;overflow:hidden;letter-spacing:-0.114px;transform:scaleX(0.877);transform-origin:0 0;">-</div>
<div class="t d" style="left:809.5px;top:121.77px;font-size:15.39px;line-height:15.39px;color:#1c1c1c;width:87.23px;overflow:hidden;letter-spacing:-0.114px;transform:scaleX(0.877);transform-origin:0 0;">2÷3,6÷7,9÷1</div>
<div class="t d" style="left:890.5px;top:121.77px;font-size:15.39px;line-height:15.39px;color:#1c1c1c;width:88.37px;overflow:hidden;letter-spacing:-0.114px;transform:scaleX(0.877);transform-origin:0 0;">EB3EA3FBE2</div>
<div class="t d" style="left:972.5px;top:121.77px;font-size:15.39px;line-height:15.39px;color:#1c1c1c;width:86.09px;overflow:hidden;letter-spacing:-0.114px;transform:scaleX(0.877);transform-origin:0 0;">CCB8E4F6F0</div>
<div class="t d" style="left:3px;top:145.53px;font-size:15.39px;line-height:15.39px;color:#000;letter-spacing:-0.114px;transform:scaleX(0.877);transform-origin:0 0;">7</div>
<div class="t d" style="left:41.5px;top:145.53px;font-size:15.39px;line-height:15.39px;color:#1c1c1c;width:22.23px;overflow:hidden;letter-spacing:-0.114px;transform:scaleX(0.877);transform-origin:0 0;">8</div>
<div class="t d" style="left:65.5px;top:145.53px;font-size:15.39px;line-height:15.39px;color:#1c1c1c;width:31.36px;overflow:hidden;letter-spacing:-0.114px;transform:scaleX(0.877);transform-origin:0 0;">6</div>
<div class="t d" style="left:97.5px;top:145.53px;font-size:15.39px;line-height:15.39px;color:#1c1c1c;width:131.70px;overflow:hidden;letter-spacing:-0.114px;transform:scaleX(0.877);transform-origin:0 0;">¸îª#î<i class="b"></i>&gt;:<i class="b"></i>ÿÕÿ</div>
<div class="t d" style="left:217.5px;top:145.53px;font-size:15.39px;line-height:15.39px;color:#1c1c1c;width:257.13px;overflow:hidden;letter-spacing:-0.114px;transform:scaleX(0.877);transform-origin:0 0;">10: Schematisch</div>
<div class="t d" style="left:447.5px;top:145.53px;font-size:15.39px;line-height:15.39px;color:#1c1c1c;width:50.74px;overflow:hidden;letter-spacing:-0.114px;transform:scaleX(0.877);transform-origin:0 0;">Schema</div>
<div class="t d" style="left:496.5px;top:147.46px;font-size:13.11px;line-height:13.11px;color:#5a5a5a;width:63.28px;overflow:hidden;letter-spacing:0.456px;transform:scaleX(0.877);transform-origin:0 0;">****</div>
<div class="t d" style="left:556.5px;top:147.46px;font-size:13.11px;line-height:13.11px;color:#5a5a5a;width:62.14px;overflow:hidden;letter-spacing:0.456px;transform:scaleX(0.877);transform-origin:0 0;">****</div>
<div class="t d" style="left:615.5px;top:145.53px;font-size:15.39px;line-height:15.39px;color:#1c1c1c;width:123.72px;overflow:hidden;letter-spacing:-0.114px;transform:scaleX(0.877);transform-origin:0 0;">-</div>
<div class="t d" style="left:728.5px;top:145.53px;font-size:15.39px;line-height:15.39px;color:#1c1c1c;width:87.23px;overflow:hidden;letter-spacing:-0.114px;transform:scaleX(0.877);transform-origin:0 0;">-</div>
<div class="t d" style="left:809.5px;top:145.53px;font-size:15.39px;line-height:15.39px;color:#1c1c1c;width:87.23px;overflow:hidden;letter-spacing:-0.114px;transform:scaleX(0.877);transform-origin:0 0;">1,3÷5,7÷8,11</div>
<div class="t d" style="left:890.5px;top:145.53px;font-size:15.39px;line-height:15.39px;color:#1c1c1c;width:88.37px;overflow:hidden;letter-spacing:-0.114px;transform:scaleX(0.877);transform-origin:0 0;">BAACBEAFE</div>
<div class="t d" style="left:972.5px;top:145.53px;font-size:15.39px;line-height:15.39px;color:#1c1c1c;width:86.09px;overflow:hidden;letter-spacing:-0.114px;transform:scaleX(0.877);transform-origin:0 0;">EFF2B1280B</div>
<div class="t d" style="left:3px;top:169.29px;font-size:15.39px;line-height:15.39px;color:#000;letter-spacing:-0.114px;transform:scaleX(0.877);transform-origin:0 0;">8</div>
<div class="t d" style="left:41.5px;top:169.29px;font-size:15.39px;line-height:15.39px;color:#1c1c1c;width:22.23px;overflow:hidden;letter-spacing:-0.114px;transform:scaleX(0.877);transform-origin:0 0;">0</div>
<div class="t d" style="left:65.5px;top:169.29px;font-size:15.39px;line-height:15.39px;color:#1c1c1c;width:31.36px;overflow:hidden;letter-spacing:-0.114px;transform:scaleX(0.877);transform-origin:0 0;">7</div>
<div class="t d" style="left:97.5px;top:169.29px;font-size:15.39px;line-height:15.39px;color:#1c1c1c;width:131.70px;overflow:hidden;letter-spacing:-0.114px;transform:scaleX(0.877);transform-origin:0 0;">®¸ª)<i class="b"></i> <i class="b"></i>f<i class="b"></i><i class="b"></i>ê¾<i class="b"></i>º</div>
<div class="t d" style="left:217.5px;top:169.29px;font-size:15.39px;line-height:15.39px;color:#1c1c1c;width:257.13px;overflow:hidden;letter-spacing:-0.114px;transform:scaleX(0.877);transform-origin:0 0;">14: ????</div>
<div class="t d" style="left:496.5px;top:171.22px;font-size:13.11px;line-height:13.11px;color:#5a5a5a;width:63.28px;overflow:hidden;letter-spacing:0.456px;transform:scaleX(0.877);transform-origin:0 0;">****</div>
<div class="t d" style="left:556.5px;top:171.22px;font-size:13.11px;line-height:13.11px;color:#5a5a5a;width:62.14px;overflow:hidden;letter-spacing:0.456px;transform:scaleX(0.877);transform-origin:0 0;">****</div>
<div class="t d" style="left:615.5px;top:169.29px;font-size:15.39px;line-height:15.39px;color:#1c1c1c;width:123.72px;overflow:hidden;letter-spacing:-0.114px;transform:scaleX(0.877);transform-origin:0 0;">-</div>
<div class="t d" style="left:728.5px;top:169.29px;font-size:15.39px;line-height:15.39px;color:#1c1c1c;width:87.23px;overflow:hidden;letter-spacing:-0.114px;transform:scaleX(0.877);transform-origin:0 0;">-</div>
<div class="t d" style="left:809.5px;top:169.29px;font-size:15.39px;line-height:15.39px;color:#1c1c1c;width:87.23px;overflow:hidden;letter-spacing:-0.114px;transform:scaleX(0.877);transform-origin:0 0;">2,4÷5,7,10,1</div>
<div class="t d" style="left:890.5px;top:169.29px;font-size:15.39px;line-height:15.39px;color:#1c1c1c;width:88.37px;overflow:hidden;letter-spacing:-0.114px;transform:scaleX(0.877);transform-origin:0 0;">BAEAAAAA2</div>
<div class="t d" style="left:972.5px;top:169.29px;font-size:15.39px;line-height:15.39px;color:#1c1c1c;width:86.09px;overflow:hidden;letter-spacing:-0.114px;transform:scaleX(0.877);transform-origin:0 0;">CCCE7F86E0</div>
<div class="t d" style="left:3px;top:193.05px;font-size:15.39px;line-height:15.39px;color:#000;letter-spacing:-0.114px;transform:scaleX(0.877);transform-origin:0 0;">9</div>
<div class="t d" style="left:41.5px;top:193.05px;font-size:15.39px;line-height:15.39px;color:#1c1c1c;width:22.23px;overflow:hidden;letter-spacing:-0.114px;transform:scaleX(0.877);transform-origin:0 0;">6</div>
<div class="t d" style="left:65.5px;top:193.05px;font-size:15.39px;line-height:15.39px;color:#1c1c1c;width:31.36px;overflow:hidden;letter-spacing:-0.114px;transform:scaleX(0.877);transform-origin:0 0;">8</div>
<div class="t d" style="left:97.5px;top:193.05px;font-size:15.39px;line-height:15.39px;color:#1c1c1c;width:131.70px;overflow:hidden;letter-spacing:-0.114px;transform:scaleX(0.877);transform-origin:0 0;">¯&#x27;&#x27;¬À<i class="b"></i>Ý²¼ªÎöpýò</div>
<div class="t d" style="left:217.5px;top:193.05px;font-size:15.39px;line-height:15.39px;color:#1c1c1c;width:257.13px;overflow:hidden;letter-spacing:-0.114px;transform:scaleX(0.877);transform-origin:0 0;">15: ????</div>
<div class="t d" style="left:496.5px;top:194.98px;font-size:13.11px;line-height:13.11px;color:#5a5a5a;width:63.28px;overflow:hidden;letter-spacing:0.456px;transform:scaleX(0.877);transform-origin:0 0;">****</div>
<div class="t d" style="left:556.5px;top:194.98px;font-size:13.11px;line-height:13.11px;color:#5a5a5a;width:62.14px;overflow:hidden;letter-spacing:0.456px;transform:scaleX(0.877);transform-origin:0 0;">****</div>
<div class="t d" style="left:615.5px;top:193.05px;font-size:15.39px;line-height:15.39px;color:#1c1c1c;width:123.72px;overflow:hidden;letter-spacing:-0.114px;transform:scaleX(0.877);transform-origin:0 0;">-</div>
<div class="t d" style="left:728.5px;top:193.05px;font-size:15.39px;line-height:15.39px;color:#1c1c1c;width:87.23px;overflow:hidden;letter-spacing:-0.114px;transform:scaleX(0.877);transform-origin:0 0;">-</div>
<div class="t d" style="left:809.5px;top:193.05px;font-size:15.39px;line-height:15.39px;color:#1c1c1c;width:87.23px;overflow:hidden;letter-spacing:-0.114px;transform:scaleX(0.877);transform-origin:0 0;">2,4÷5,7÷14,1</div>
<div class="t d" style="left:890.5px;top:193.05px;font-size:15.39px;line-height:15.39px;color:#1c1c1c;width:88.37px;overflow:hidden;letter-spacing:-0.114px;transform:scaleX(0.877);transform-origin:0 0;">BFA43A37E8</div>
<div class="t d" style="left:972.5px;top:193.05px;font-size:15.39px;line-height:15.39px;color:#1c1c1c;width:86.09px;overflow:hidden;letter-spacing:-0.114px;transform:scaleX(0.877);transform-origin:0 0;">CABB89EE6E</div>
<div class="t d" style="left:3px;top:216.81px;font-size:15.39px;line-height:15.39px;color:#000;letter-spacing:-0.114px;transform:scaleX(0.877);transform-origin:0 0;">10</div>
<div class="t d" style="left:41.5px;top:216.81px;font-size:15.39px;line-height:15.39px;color:#1c1c1c;width:22.23px;overflow:hidden;letter-spacing:-0.114px;transform:scaleX(0.877);transform-origin:0 0;">0</div>
<div class="t d" style="left:65.5px;top:216.81px;font-size:15.39px;line-height:15.39px;color:#1c1c1c;width:31.36px;overflow:hidden;letter-spacing:-0.114px;transform:scaleX(0.877);transform-origin:0 0;">9</div>
<div class="t d" style="left:97.5px;top:216.81px;font-size:15.39px;line-height:15.39px;color:#1c1c1c;width:131.70px;overflow:hidden;letter-spacing:-0.114px;transform:scaleX(0.877);transform-origin:0 0;">«Ê˚<i class="b"></i><i class="b"></i><i class="b"></i><i class="b"></i><i class="b"></i>#¾<i class="b"></i><i class="b"></i>ó²<i class="b"></i>;</div>
<div class="t d" style="left:217.5px;top:216.81px;font-size:15.39px;line-height:15.39px;color:#1c1c1c;width:257.13px;overflow:hidden;letter-spacing:-0.114px;transform:scaleX(0.877);transform-origin:0 0;">11: ????</div>
<div class="t d" style="left:496.5px;top:218.74px;font-size:13.11px;line-height:13.11px;color:#5a5a5a;width:63.28px;overflow:hidden;letter-spacing:0.456px;transform:scaleX(0.877);transform-origin:0 0;">****</div>
<div class="t d" style="left:556.5px;top:218.74px;font-size:13.11px;line-height:13.11px;color:#5a5a5a;width:62.14px;overflow:hidden;letter-spacing:0.456px;transform:scaleX(0.877);transform-origin:0 0;">****</div>
<div class="t d" style="left:615.5px;top:216.81px;font-size:15.39px;line-height:15.39px;color:#1c1c1c;width:123.72px;overflow:hidden;letter-spacing:-0.114px;transform:scaleX(0.877);transform-origin:0 0;">-</div>
<div class="t d" style="left:728.5px;top:216.81px;font-size:15.39px;line-height:15.39px;color:#1c1c1c;width:87.23px;overflow:hidden;letter-spacing:-0.114px;transform:scaleX(0.877);transform-origin:0 0;">-</div>
<div class="t d" style="left:809.5px;top:216.81px;font-size:15.39px;line-height:15.39px;color:#1c1c1c;width:87.23px;overflow:hidden;letter-spacing:-0.114px;transform:scaleX(0.877);transform-origin:0 0;">1÷2,5,7,9÷11</div>
<div class="t d" style="left:890.5px;top:216.81px;font-size:15.39px;line-height:15.39px;color:#1c1c1c;width:88.37px;overflow:hidden;letter-spacing:-0.114px;transform:scaleX(0.877);transform-origin:0 0;">279BCEE2AF</div>
<div class="t d" style="left:972.5px;top:216.81px;font-size:15.39px;line-height:15.39px;color:#1c1c1c;width:86.09px;overflow:hidden;letter-spacing:-0.114px;transform:scaleX(0.877);transform-origin:0 0;">2BEEAEFF67</div>
<div class="t d" style="left:3px;top:240.57px;font-size:15.39px;line-height:15.39px;color:#000;letter-spacing:-0.114px;transform:scaleX(0.877);transform-origin:0 0;">11</div>
<div class="t d" style="left:41.5px;top:240.57px;font-size:15.39px;line-height:15.39px;color:#1c1c1c;width:22.23px;overflow:hidden;letter-spacing:-0.114px;transform:scaleX(0.877);transform-origin:0 0;">0</div>
<div class="t d" style="left:65.5px;top:240.57px;font-size:15.39px;line-height:15.39px;color:#1c1c1c;width:31.36px;overflow:hidden;letter-spacing:-0.114px;transform:scaleX(0.877);transform-origin:0 0;">10</div>
<div class="t d" style="left:97.5px;top:240.57px;font-size:15.39px;line-height:15.39px;color:#1c1c1c;width:131.70px;overflow:hidden;letter-spacing:-0.114px;transform:scaleX(0.877);transform-origin:0 0;">ªî&amp;ªøÈä¾úðª<i class="b"></i>s</div>
<div class="t d" style="left:217.5px;top:240.57px;font-size:15.39px;line-height:15.39px;color:#1c1c1c;width:257.13px;overflow:hidden;letter-spacing:-0.114px;transform:scaleX(0.877);transform-origin:0 0;">3: Auf Zeit, nicht erneuerbar</div>
<div class="t d" style="left:447.5px;top:240.57px;font-size:15.39px;line-height:15.39px;color:#1c1c1c;width:50.74px;overflow:hidden;letter-spacing:-0.114px;transform:scaleX(0.877);transform-origin:0 0;">110 Tage</div>
<div class="t d" style="left:496.5px;top:242.50px;font-size:13.11px;line-height:13.11px;color:#5a5a5a;width:63.28px;overflow:hidden;letter-spacing:0.456px;transform:scaleX(0.877);transform-origin:0 0;">****</div>
<div class="t d" style="left:556.5px;top:242.50px;font-size:13.11px;line-height:13.11px;color:#5a5a5a;width:62.14px;overflow:hidden;letter-spacing:0.456px;transform:scaleX(0.877);transform-origin:0 0;">****</div>
<div class="t d" style="left:615.5px;top:240.57px;font-size:15.39px;line-height:15.39px;color:#1c1c1c;width:123.72px;overflow:hidden;letter-spacing:-0.114px;transform:scaleX(0.877);transform-origin:0 0;">-</div>
<div class="t d" style="left:728.5px;top:240.57px;font-size:15.39px;line-height:15.39px;color:#1c1c1c;width:87.23px;overflow:hidden;letter-spacing:-0.114px;transform:scaleX(0.877);transform-origin:0 0;">-</div>
<div class="t d" style="left:809.5px;top:240.57px;font-size:15.39px;line-height:15.39px;color:#1c1c1c;width:87.23px;overflow:hidden;letter-spacing:-0.114px;transform:scaleX(0.877);transform-origin:0 0;">5÷8,10÷11,1</div>
<div class="t d" style="left:890.5px;top:240.57px;font-size:15.39px;line-height:15.39px;color:#1c1c1c;width:88.37px;overflow:hidden;letter-spacing:-0.114px;transform:scaleX(0.877);transform-origin:0 0;">EA8F621214</div>
<div class="t d" style="left:972.5px;top:240.57px;font-size:15.39px;line-height:15.39px;color:#1c1c1c;width:86.09px;overflow:hidden;letter-spacing:-0.114px;transform:scaleX(0.877);transform-origin:0 0;">DE2E8BAAB</div>
<div class="t d" style="left:3px;top:264.33px;font-size:15.39px;line-height:15.39px;color:#000;letter-spacing:-0.114px;transform:scaleX(0.877);transform-origin:0 0;">12</div>
<div class="t d" style="left:41.5px;top:264.33px;font-size:15.39px;line-height:15.39px;color:#1c1c1c;width:22.23px;overflow:hidden;letter-spacing:-0.114px;transform:scaleX(0.877);transform-origin:0 0;">0</div>
<div class="t d" style="left:65.5px;top:264.33px;font-size:15.39px;line-height:15.39px;color:#1c1c1c;width:31.36px;overflow:hidden;letter-spacing:-0.114px;transform:scaleX(0.877);transform-origin:0 0;">11</div>
<div class="t d" style="left:97.5px;top:264.33px;font-size:15.39px;line-height:15.39px;color:#1c1c1c;width:131.70px;overflow:hidden;letter-spacing:-0.114px;transform:scaleX(0.877);transform-origin:0 0;">èª¨ª¼<i class="b"></i>˚¿<i class="b"></i>çëÏ<i class="b"></i><i class="b"></i>a</div>
<div class="t d" style="left:217.5px;top:264.33px;font-size:15.39px;line-height:15.39px;color:#1c1c1c;width:257.13px;overflow:hidden;letter-spacing:-0.114px;transform:scaleX(0.877);transform-origin:0 0;">9: Wächter</div>
<div class="t d" style="left:496.5px;top:266.26px;font-size:13.11px;line-height:13.11px;color:#5a5a5a;width:63.28px;overflow:hidden;letter-spacing:0.456px;transform:scaleX(0.877);transform-origin:0 0;">****</div>
<div class="t d" style="left:556.5px;top:266.26px;font-size:13.11px;line-height:13.11px;color:#5a5a5a;width:62.14px;overflow:hidden;letter-spacing:0.456px;transform:scaleX(0.877);transform-origin:0 0;">****</div>
<div class="t d" style="left:615.5px;top:264.33px;font-size:15.39px;line-height:15.39px;color:#1c1c1c;width:123.72px;overflow:hidden;letter-spacing:-0.114px;transform:scaleX(0.877);transform-origin:0 0;">-</div>
<div class="t d" style="left:728.5px;top:264.33px;font-size:15.39px;line-height:15.39px;color:#1c1c1c;width:87.23px;overflow:hidden;letter-spacing:-0.114px;transform:scaleX(0.877);transform-origin:0 0;">-</div>
<div class="t d" style="left:809.5px;top:264.33px;font-size:15.39px;line-height:15.39px;color:#1c1c1c;width:87.23px;overflow:hidden;letter-spacing:-0.114px;transform:scaleX(0.877);transform-origin:0 0;">1÷2,5,7÷11,1</div>
<div class="t d" style="left:890.5px;top:264.33px;font-size:15.39px;line-height:15.39px;color:#1c1c1c;width:88.37px;overflow:hidden;letter-spacing:-0.114px;transform:scaleX(0.877);transform-origin:0 0;">42C08E37AE</div>
<div class="t d" style="left:972.5px;top:264.33px;font-size:15.39px;line-height:15.39px;color:#1c1c1c;width:86.09px;overflow:hidden;letter-spacing:-0.114px;transform:scaleX(0.877);transform-origin:0 0;">34F3EFDBD0</div>
<div class="t d" style="left:3px;top:288.09px;font-size:15.39px;line-height:15.39px;color:#000;letter-spacing:-0.114px;transform:scaleX(0.877);transform-origin:0 0;">13</div>
<div class="t d" style="left:41.5px;top:288.09px;font-size:15.39px;line-height:15.39px;color:#1c1c1c;width:22.23px;overflow:hidden;letter-spacing:-0.114px;transform:scaleX(0.877);transform-origin:0 0;">0</div>
<div class="t d" style="left:65.5px;top:288.09px;font-size:15.39px;line-height:15.39px;color:#1c1c1c;width:31.36px;overflow:hidden;letter-spacing:-0.114px;transform:scaleX(0.877);transform-origin:0 0;">12</div>
<div class="t d" style="left:97.5px;top:288.09px;font-size:15.39px;line-height:15.39px;color:#1c1c1c;width:131.70px;overflow:hidden;letter-spacing:-0.114px;transform:scaleX(0.877);transform-origin:0 0;">¨ú:<i class="b"></i><i class="b"></i>íóþê<i class="b"></i>épÂ<i class="b"></i></div>
<div class="t d" style="left:217.5px;top:288.09px;font-size:15.39px;line-height:15.39px;color:#1c1c1c;width:257.13px;overflow:hidden;letter-spacing:-0.114px;transform:scaleX(0.877);transform-origin:0 0;">10: Schematisch</div>
<div class="t d" style="left:447.5px;top:288.09px;font-size:15.39px;line-height:15.39px;color:#1c1c1c;width:50.74px;overflow:hidden;letter-spacing:-0.114px;transform:scaleX(0.877);transform-origin:0 0;">Schema</div>
<div class="t d" style="left:496.5px;top:290.02px;font-size:13.11px;line-height:13.11px;color:#5a5a5a;width:63.28px;overflow:hidden;letter-spacing:0.456px;transform:scaleX(0.877);transform-origin:0 0;">****</div>
<div class="t d" style="left:556.5px;top:290.02px;font-size:13.11px;line-height:13.11px;color:#5a5a5a;width:62.14px;overflow:hidden;letter-spacing:0.456px;transform:scaleX(0.877);transform-origin:0 0;">****</div>
<div class="t d" style="left:615.5px;top:288.09px;font-size:15.39px;line-height:15.39px;color:#1c1c1c;width:123.72px;overflow:hidden;letter-spacing:-0.114px;transform:scaleX(0.877);transform-origin:0 0;">-</div>
<div class="t d" style="left:728.5px;top:288.09px;font-size:15.39px;line-height:15.39px;color:#1c1c1c;width:87.23px;overflow:hidden;letter-spacing:-0.114px;transform:scaleX(0.877);transform-origin:0 0;">-</div>
<div class="t d" style="left:809.5px;top:288.09px;font-size:15.39px;line-height:15.39px;color:#1c1c1c;width:87.23px;overflow:hidden;letter-spacing:-0.114px;transform:scaleX(0.877);transform-origin:0 0;">1÷2,8,10÷20,</div>
<div class="t d" style="left:890.5px;top:288.09px;font-size:15.39px;line-height:15.39px;color:#1c1c1c;width:88.37px;overflow:hidden;letter-spacing:-0.114px;transform:scaleX(0.877);transform-origin:0 0;">F7BAF2EB2D</div>
<div class="t d" style="left:972.5px;top:288.09px;font-size:15.39px;line-height:15.39px;color:#1c1c1c;width:86.09px;overflow:hidden;letter-spacing:-0.114px;transform:scaleX(0.877);transform-origin:0 0;">EC28B6BD3E</div>
<div class="t d" style="left:3px;top:311.85px;font-size:15.39px;line-height:15.39px;color:#000;letter-spacing:-0.114px;transform:scaleX(0.877);transform-origin:0 0;">14</div>
<div class="t d" style="left:41.5px;top:311.85px;font-size:15.39px;line-height:15.39px;color:#1c1c1c;width:22.23px;overflow:hidden;letter-spacing:-0.114px;transform:scaleX(0.877);transform-origin:0 0;">0</div>
<div class="t d" style="left:65.5px;top:311.85px;font-size:15.39px;line-height:15.39px;color:#1c1c1c;width:31.36px;overflow:hidden;letter-spacing:-0.114px;transform:scaleX(0.877);transform-origin:0 0;">13</div>
<div class="t d" style="left:97.5px;top:311.85px;font-size:15.39px;line-height:15.39px;color:#1c1c1c;width:131.70px;overflow:hidden;letter-spacing:-0.114px;transform:scaleX(0.877);transform-origin:0 0;">ê€¿¯¨Õº»òç€<i class="b"></i>/<i class="b"></i>3</div>
<div class="t d" style="left:217.5px;top:311.85px;font-size:15.39px;line-height:15.39px;color:#1c1c1c;width:257.13px;overflow:hidden;letter-spacing:-0.114px;transform:scaleX(0.877);transform-origin:0 0;">2: Auf Zeit, erneuerbar</div>
<div class="t d" style="left:447.5px;top:311.85px;font-size:15.39px;line-height:15.39px;color:#1c1c1c;width:50.74px;overflow:hidden;letter-spacing:-0.114px;transform:scaleX(0.877);transform-origin:0 0;">158 Tage</div>
<div class="t d" style="left:496.5px;top:313.78px;font-size:13.11px;line-height:13.11px;color:#5a5a5a;width:63.28px;overflow:hidden;letter-spacing:0.456px;transform:scaleX(0.877);transform-origin:0 0;">****</div>
<div class="t d" style="left:556.5px;top:313.78px;font-size:13.11px;line-height:13.11px;color:#5a5a5a;width:62.14px;overflow:hidden;letter-spacing:0.456px;transform:scaleX(0.877);transform-origin:0 0;">****</div>
<div class="t d" style="left:615.5px;top:311.85px;font-size:15.39px;line-height:15.39px;color:#1c1c1c;width:123.72px;overflow:hidden;letter-spacing:-0.114px;transform:scaleX(0.877);transform-origin:0 0;">-</div>
<div class="t d" style="left:728.5px;top:311.85px;font-size:15.39px;line-height:15.39px;color:#1c1c1c;width:87.23px;overflow:hidden;letter-spacing:-0.114px;transform:scaleX(0.877);transform-origin:0 0;">-</div>
<div class="t d" style="left:809.5px;top:311.85px;font-size:15.39px;line-height:15.39px;color:#1c1c1c;width:87.23px;overflow:hidden;letter-spacing:-0.114px;transform:scaleX(0.877);transform-origin:0 0;">2÷3,6,8÷11,1</div>
<div class="t d" style="left:890.5px;top:311.85px;font-size:15.39px;line-height:15.39px;color:#1c1c1c;width:88.37px;overflow:hidden;letter-spacing:-0.114px;transform:scaleX(0.877);transform-origin:0 0;">0024CF3BF6</div>
<div class="t d" style="left:972.5px;top:311.85px;font-size:15.39px;line-height:15.39px;color:#1c1c1c;width:86.09px;overflow:hidden;letter-spacing:-0.114px;transform:scaleX(0.877);transform-origin:0 0;">8F6CAEAE2A</div>
<div class="t d" style="left:3px;top:335.61px;font-size:15.39px;line-height:15.39px;color:#000;letter-spacing:-0.114px;transform:scaleX(0.877);transform-origin:0 0;">15</div>
<div class="t d" style="left:41.5px;top:335.61px;font-size:15.39px;line-height:15.39px;color:#1c1c1c;width:22.23px;overflow:hidden;letter-spacing:-0.114px;transform:scaleX(0.877);transform-origin:0 0;">6</div>
<div class="t d" style="left:65.5px;top:335.61px;font-size:15.39px;line-height:15.39px;color:#1c1c1c;width:31.36px;overflow:hidden;letter-spacing:-0.114px;transform:scaleX(0.877);transform-origin:0 0;">14</div>
<div class="t d" style="left:97.5px;top:335.61px;font-size:15.39px;line-height:15.39px;color:#1c1c1c;width:131.70px;overflow:hidden;letter-spacing:-0.114px;transform:scaleX(0.877);transform-origin:0 0;">³ºº.<i class="b"></i><i class="b"></i>Èþ<i class="b"></i>ë]ûÏ¾</div>
<div class="t d" style="left:217.5px;top:335.61px;font-size:15.39px;line-height:15.39px;color:#1c1c1c;width:257.13px;overflow:hidden;letter-spacing:-0.114px;transform:scaleX(0.877);transform-origin:0 0;">2: Auf Zeit, erneuerbar</div>
<div class="t d" style="left:447.5px;top:335.61px;font-size:15.39px;line-height:15.39px;color:#1c1c1c;width:50.74px;overflow:hidden;letter-spacing:-0.114px;transform:scaleX(0.877);transform-origin:0 0;">135 Tage</div>
<div class="t d" style="left:496.5px;top:337.54px;font-size:13.11px;line-height:13.11px;color:#5a5a5a;width:63.28px;overflow:hidden;letter-spacing:0.456px;transform:scaleX(0.877);transform-origin:0 0;">****</div>
<div class="t d" style="left:556.5px;top:337.54px;font-size:13.11px;line-height:13.11px;color:#5a5a5a;width:62.14px;overflow:hidden;letter-spacing:0.456px;transform:scaleX(0.877);transform-origin:0 0;">****</div>
<div class="t d" style="left:615.5px;top:335.61px;font-size:15.39px;line-height:15.39px;color:#1c1c1c;width:123.72px;overflow:hidden;letter-spacing:-0.114px;transform:scaleX(0.877);transform-origin:0 0;">-</div>
<div class="t d" style="left:728.5px;top:335.61px;font-size:15.39px;line-height:15.39px;color:#1c1c1c;width:87.23px;overflow:hidden;letter-spacing:-0.114px;transform:scaleX(0.877);transform-origin:0 0;">-</div>
<div class="t d" style="left:809.5px;top:335.61px;font-size:15.39px;line-height:15.39px;color:#1c1c1c;width:87.23px;overflow:hidden;letter-spacing:-0.114px;transform:scaleX(0.877);transform-origin:0 0;">2÷5,7,10÷11,</div>
<div class="t d" style="left:890.5px;top:335.61px;font-size:15.39px;line-height:15.39px;color:#1c1c1c;width:88.37px;overflow:hidden;letter-spacing:-0.114px;transform:scaleX(0.877);transform-origin:0 0;">FA09222BBD</div>
<div class="t d" style="left:972.5px;top:335.61px;font-size:15.39px;line-height:15.39px;color:#1c1c1c;width:86.09px;overflow:hidden;letter-spacing:-0.114px;transform:scaleX(0.877);transform-origin:0 0;">8F42ACBBFE</div>
<div class="t d" style="left:3px;top:359.37px;font-size:15.39px;line-height:15.39px;color:#000;letter-spacing:-0.114px;transform:scaleX(0.877);transform-origin:0 0;">16</div>
<div class="t d" style="left:41.5px;top:359.37px;font-size:15.39px;line-height:15.39px;color:#1c1c1c;width:22.23px;overflow:hidden;letter-spacing:-0.114px;transform:scaleX(0.877);transform-origin:0 0;">8</div>
<div class="t d" style="left:65.5px;top:359.37px;font-size:15.39px;line-height:15.39px;color:#1c1c1c;width:31.36px;overflow:hidden;letter-spacing:-0.114px;transform:scaleX(0.877);transform-origin:0 0;">15</div>
<div class="t d" style="left:97.5px;top:359.37px;font-size:15.39px;line-height:15.39px;color:#1c1c1c;width:131.70px;overflow:hidden;letter-spacing:-0.114px;transform:scaleX(0.877);transform-origin:0 0;">±Î»<i class="b"></i>)«<i class="b"></i>ïÿ.Ægú<i class="b"></i>þ</div>
<div class="t d" style="left:217.5px;top:359.37px;font-size:15.39px;line-height:15.39px;color:#1c1c1c;width:257.13px;overflow:hidden;letter-spacing:-0.114px;transform:scaleX(0.877);transform-origin:0 0;">15: ????</div>
<div class="t d" style="left:496.5px;top:361.30px;font-size:13.11px;line-height:13.11px;color:#5a5a5a;width:63.28px;overflow:hidden;letter-spacing:0.456px;transform:scaleX(0.877);transform-origin:0 0;">****</div>
<div class="t d" style="left:556.5px;top:361.30px;font-size:13.11px;line-height:13.11px;color:#5a5a5a;width:62.14px;overflow:hidden;letter-spacing:0.456px;transform:scaleX(0.877);transform-origin:0 0;">****</div>
<div class="t d" style="left:615.5px;top:359.37px;font-size:15.39px;line-height:15.39px;color:#1c1c1c;width:123.72px;overflow:hidden;letter-spacing:-0.114px;transform:scaleX(0.877);transform-origin:0 0;">-</div>
<div class="t d" style="left:728.5px;top:359.37px;font-size:15.39px;line-height:15.39px;color:#1c1c1c;width:87.23px;overflow:hidden;letter-spacing:-0.114px;transform:scaleX(0.877);transform-origin:0 0;">-</div>
<div class="t d" style="left:809.5px;top:359.37px;font-size:15.39px;line-height:15.39px;color:#1c1c1c;width:87.23px;overflow:hidden;letter-spacing:-0.114px;transform:scaleX(0.877);transform-origin:0 0;">1÷2,4÷5,8,14</div>
<div class="t d" style="left:890.5px;top:359.37px;font-size:15.39px;line-height:15.39px;color:#1c1c1c;width:88.37px;overflow:hidden;letter-spacing:-0.114px;transform:scaleX(0.877);transform-origin:0 0;">76EABE3CD</div>
<div class="t d" style="left:972.5px;top:359.37px;font-size:15.39px;line-height:15.39px;color:#1c1c1c;width:86.09px;overflow:hidden;letter-spacing:-0.114px;transform:scaleX(0.877);transform-origin:0 0;">40A3DEAEE</div>
<div class="t d" style="left:3px;top:383.13px;font-size:15.39px;line-height:15.39px;color:#000;letter-spacing:-0.114px;transform:scaleX(0.877);transform-origin:0 0;">17</div>
<div class="t d" style="left:41.5px;top:383.13px;font-size:15.39px;line-height:15.39px;color:#1c1c1c;width:22.23px;overflow:hidden;letter-spacing:-0.114px;transform:scaleX(0.877);transform-origin:0 0;">6</div>
<div class="t d" style="left:65.5px;top:383.13px;font-size:15.39px;line-height:15.39px;color:#1c1c1c;width:31.36px;overflow:hidden;letter-spacing:-0.114px;transform:scaleX(0.877);transform-origin:0 0;">16</div>
<div class="t d" style="left:97.5px;top:383.13px;font-size:15.39px;line-height:15.39px;color:#1c1c1c;width:131.70px;overflow:hidden;letter-spacing:-0.114px;transform:scaleX(0.877);transform-origin:0 0;">(<i class="b"></i>¢ª(G<i class="b"></i>ªçê<i class="b"></i>þêï»</div>
<div class="t d" style="left:217.5px;top:383.13px;font-size:15.39px;line-height:15.39px;color:#1c1c1c;width:257.13px;overflow:hidden;letter-spacing:-0.114px;transform:scaleX(0.877);transform-origin:0 0;">8: Zugriff auf Bankautomat entsperrt</div>
<div class="t d" style="left:496.5px;top:385.06px;font-size:13.11px;line-height:13.11px;color:#5a5a5a;width:63.28px;overflow:hidden;letter-spacing:0.456px;transform:scaleX(0.877);transform-origin:0 0;">****</div>
<div class="t d" style="left:556.5px;top:385.06px;font-size:13.11px;line-height:13.11px;color:#5a5a5a;width:62.14px;overflow:hidden;letter-spacing:0.456px;transform:scaleX(0.877);transform-origin:0 0;">****</div>
<div class="t d" style="left:615.5px;top:383.13px;font-size:15.39px;line-height:15.39px;color:#1c1c1c;width:123.72px;overflow:hidden;letter-spacing:-0.114px;transform:scaleX(0.877);transform-origin:0 0;">-</div>
<div class="t d" style="left:728.5px;top:383.13px;font-size:15.39px;line-height:15.39px;color:#1c1c1c;width:87.23px;overflow:hidden;letter-spacing:-0.114px;transform:scaleX(0.877);transform-origin:0 0;">-</div>
<div class="t d" style="left:809.5px;top:383.13px;font-size:15.39px;line-height:15.39px;color:#1c1c1c;width:87.23px;overflow:hidden;letter-spacing:-0.114px;transform:scaleX(0.877);transform-origin:0 0;">1÷3,6÷8,12÷1</div>
<div class="t d" style="left:890.5px;top:383.13px;font-size:15.39px;line-height:15.39px;color:#1c1c1c;width:88.37px;overflow:hidden;letter-spacing:-0.114px;transform:scaleX(0.877);transform-origin:0 0;">7873BBBAF2</div>
<div class="t d" style="left:972.5px;top:383.13px;font-size:15.39px;line-height:15.39px;color:#1c1c1c;width:86.09px;overflow:hidden;letter-spacing:-0.114px;transform:scaleX(0.877);transform-origin:0 0;">E03A44CB3E</div>
<div class="t d" style="left:3px;top:406.89px;font-size:15.39px;line-height:15.39px;color:#000;letter-spacing:-0.114px;transform:scaleX(0.877);transform-origin:0 0;">18</div>
<div class="t d" style="left:41.5px;top:406.89px;font-size:15.39px;line-height:15.39px;color:#1c1c1c;width:22.23px;overflow:hidden;letter-spacing:-0.114px;transform:scaleX(0.877);transform-origin:0 0;">0</div>
<div class="t d" style="left:65.5px;top:406.89px;font-size:15.39px;line-height:15.39px;color:#1c1c1c;width:31.36px;overflow:hidden;letter-spacing:-0.114px;transform:scaleX(0.877);transform-origin:0 0;">17</div>
<div class="t d" style="left:97.5px;top:406.89px;font-size:15.39px;line-height:15.39px;color:#1c1c1c;width:131.70px;overflow:hidden;letter-spacing:-0.114px;transform:scaleX(0.877);transform-origin:0 0;">+¥º(-<i class="b"></i>Nª<i class="b"></i>ûjöËé<i class="b"></i></div>
<div class="t d" style="left:217.5px;top:406.89px;font-size:15.39px;line-height:15.39px;color:#1c1c1c;width:257.13px;overflow:hidden;letter-spacing:-0.114px;transform:scaleX(0.877);transform-origin:0 0;">10: Schematisch</div>
<div class="t d" style="left:447.5px;top:406.89px;font-size:15.39px;line-height:15.39px;color:#1c1c1c;width:50.74px;overflow:hidden;letter-spacing:-0.114px;transform:scaleX(0.877);transform-origin:0 0;">Schema</div>
<div class="t d" style="left:496.5px;top:408.82px;font-size:13.11px;line-height:13.11px;color:#5a5a5a;width:63.28px;overflow:hidden;letter-spacing:0.456px;transform:scaleX(0.877);transform-origin:0 0;">****</div>
<div class="t d" style="left:556.5px;top:408.82px;font-size:13.11px;line-height:13.11px;color:#5a5a5a;width:62.14px;overflow:hidden;letter-spacing:0.456px;transform:scaleX(0.877);transform-origin:0 0;">****</div>
<div class="t d" style="left:615.5px;top:406.89px;font-size:15.39px;line-height:15.39px;color:#1c1c1c;width:123.72px;overflow:hidden;letter-spacing:-0.114px;transform:scaleX(0.877);transform-origin:0 0;">-</div>
<div class="t d" style="left:728.5px;top:406.89px;font-size:15.39px;line-height:15.39px;color:#1c1c1c;width:87.23px;overflow:hidden;letter-spacing:-0.114px;transform:scaleX(0.877);transform-origin:0 0;">-</div>
<div class="t d" style="left:809.5px;top:406.89px;font-size:15.39px;line-height:15.39px;color:#1c1c1c;width:87.23px;overflow:hidden;letter-spacing:-0.114px;transform:scaleX(0.877);transform-origin:0 0;">1÷3,5,7÷8,10</div>
<div class="t d" style="left:890.5px;top:406.89px;font-size:15.39px;line-height:15.39px;color:#1c1c1c;width:88.37px;overflow:hidden;letter-spacing:-0.114px;transform:scaleX(0.877);transform-origin:0 0;">60BABBF93F</div>
<div class="t d" style="left:972.5px;top:406.89px;font-size:15.39px;line-height:15.39px;color:#1c1c1c;width:86.09px;overflow:hidden;letter-spacing:-0.114px;transform:scaleX(0.877);transform-origin:0 0;">823AB9AACE</div>
<div class="t d" style="left:3px;top:430.65px;font-size:15.39px;line-height:15.39px;color:#000;letter-spacing:-0.114px;transform:scaleX(0.877);transform-origin:0 0;">19</div>
<div class="t d" style="left:41.5px;top:430.65px;font-size:15.39px;line-height:15.39px;color:#1c1c1c;width:22.23px;overflow:hidden;letter-spacing:-0.114px;transform:scaleX(0.877);transform-origin:0 0;">0</div>
<div class="t d" style="left:65.5px;top:430.65px;font-size:15.39px;line-height:15.39px;color:#1c1c1c;width:31.36px;overflow:hidden;letter-spacing:-0.114px;transform:scaleX(0.877);transform-origin:0 0;">18</div>
<div class="t d" style="left:97.5px;top:430.65px;font-size:15.39px;line-height:15.39px;color:#1c1c1c;width:131.70px;overflow:hidden;letter-spacing:-0.114px;transform:scaleX(0.877);transform-origin:0 0;">».<i class="b"></i>îþêo¯»è<i class="b"></i><i class="b"></i>,€ß</div>
<div class="t d" style="left:217.5px;top:430.65px;font-size:15.39px;line-height:15.39px;color:#1c1c1c;width:257.13px;overflow:hidden;letter-spacing:-0.114px;transform:scaleX(0.877);transform-origin:0 0;">15: ????</div>
<div class="t d" style="left:496.5px;top:432.58px;font-size:13.11px;line-height:13.11px;color:#5a5a5a;width:63.28px;overflow:hidden;letter-spacing:0.456px;transform:scaleX(0.877);transform-origin:0 0;">****</div>
<div class="t d" style="left:556.5px;top:432.58px;font-size:13.11px;line-height:13.11px;color:#5a5a5a;width:62.14px;overflow:hidden;letter-spacing:0.456px;transform:scaleX(0.877);transform-origin:0 0;">****</div>
<div class="t d" style="left:615.5px;top:430.65px;font-size:15.39px;line-height:15.39px;color:#1c1c1c;width:123.72px;overflow:hidden;letter-spacing:-0.114px;transform:scaleX(0.877);transform-origin:0 0;">-</div>
<div class="t d" style="left:728.5px;top:430.65px;font-size:15.39px;line-height:15.39px;color:#1c1c1c;width:87.23px;overflow:hidden;letter-spacing:-0.114px;transform:scaleX(0.877);transform-origin:0 0;">-</div>
<div class="t d" style="left:809.5px;top:430.65px;font-size:15.39px;line-height:15.39px;color:#1c1c1c;width:87.23px;overflow:hidden;letter-spacing:-0.114px;transform:scaleX(0.877);transform-origin:0 0;">4÷8,10÷12,15</div>
<div class="t d" style="left:890.5px;top:430.65px;font-size:15.39px;line-height:15.39px;color:#1c1c1c;width:88.37px;overflow:hidden;letter-spacing:-0.114px;transform:scaleX(0.877);transform-origin:0 0;">F3EE24E9EE</div>
<div class="t d" style="left:972.5px;top:430.65px;font-size:15.39px;line-height:15.39px;color:#1c1c1c;width:86.09px;overflow:hidden;letter-spacing:-0.114px;transform:scaleX(0.877);transform-origin:0 0;">FFB3FCE94E</div>
<div class="t d" style="left:3px;top:454.41px;font-size:15.39px;line-height:15.39px;color:#000;letter-spacing:-0.114px;transform:scaleX(0.877);transform-origin:0 0;">20</div>
<div class="t d" style="left:41.5px;top:454.41px;font-size:15.39px;line-height:15.39px;color:#1c1c1c;width:22.23px;overflow:hidden;letter-spacing:-0.114px;transform:scaleX(0.877);transform-origin:0 0;">0</div>
<div class="t d" style="left:65.5px;top:454.41px;font-size:15.39px;line-height:15.39px;color:#1c1c1c;width:31.36px;overflow:hidden;letter-spacing:-0.114px;transform:scaleX(0.877);transform-origin:0 0;">19</div>
<div class="t d" style="left:97.5px;top:454.41px;font-size:15.39px;line-height:15.39px;color:#1c1c1c;width:131.70px;overflow:hidden;letter-spacing:-0.114px;transform:scaleX(0.877);transform-origin:0 0;">-<i class="b"></i>ºø<i class="b"></i> »ëª<i class="b"></i>êøzª</div>
<div class="t d" style="left:217.5px;top:454.41px;font-size:15.39px;line-height:15.39px;color:#1c1c1c;width:257.13px;overflow:hidden;letter-spacing:-0.114px;transform:scaleX(0.877);transform-origin:0 0;">10: Schematisch</div>
<div class="t d" style="left:447.5px;top:454.41px;font-size:15.39px;line-height:15.39px;color:#1c1c1c;width:50.74px;overflow:hidden;letter-spacing:-0.114px;transform:scaleX(0.877);transform-origin:0 0;">Schema</div>
<div class="t d" style="left:496.5px;top:456.34px;font-size:13.11px;line-height:13.11px;color:#5a5a5a;width:63.28px;overflow:hidden;letter-spacing:0.456px;transform:scaleX(0.877);transform-origin:0 0;">****</div>
<div class="t d" style="left:556.5px;top:456.34px;font-size:13.11px;line-height:13.11px;color:#5a5a5a;width:62.14px;overflow:hidden;letter-spacing:0.456px;transform:scaleX(0.877);transform-origin:0 0;">****</div>
<div class="t d" style="left:615.5px;top:454.41px;font-size:15.39px;line-height:15.39px;color:#1c1c1c;width:123.72px;overflow:hidden;letter-spacing:-0.114px;transform:scaleX(0.877);transform-origin:0 0;">-</div>
<div class="t d" style="left:728.5px;top:454.41px;font-size:15.39px;line-height:15.39px;color:#1c1c1c;width:87.23px;overflow:hidden;letter-spacing:-0.114px;transform:scaleX(0.877);transform-origin:0 0;">-</div>
<div class="t d" style="left:809.5px;top:454.41px;font-size:15.39px;line-height:15.39px;color:#1c1c1c;width:87.23px;overflow:hidden;letter-spacing:-0.114px;transform:scaleX(0.877);transform-origin:0 0;">7÷9,11,15÷18</div>
<div class="t d" style="left:890.5px;top:454.41px;font-size:15.39px;line-height:15.39px;color:#1c1c1c;width:88.37px;overflow:hidden;letter-spacing:-0.114px;transform:scaleX(0.877);transform-origin:0 0;">FFE66EB7E2</div>
<div class="t d" style="left:972.5px;top:454.41px;font-size:15.39px;line-height:15.39px;color:#1c1c1c;width:86.09px;overflow:hidden;letter-spacing:-0.114px;transform:scaleX(0.877);transform-origin:0 0;">C3FAAE792E</div>
<div class="t d" style="left:3px;top:478.17px;font-size:15.39px;line-height:15.39px;color:#000;letter-spacing:-0.114px;transform:scaleX(0.877);transform-origin:0 0;">21</div>
<div class="t d" style="left:41.5px;top:478.17px;font-size:15.39px;line-height:15.39px;color:#1c1c1c;width:22.23px;overflow:hidden;letter-spacing:-0.114px;transform:scaleX(0.877);transform-origin:0 0;">6</div>
<div class="t d" style="left:65.5px;top:478.17px;font-size:15.39px;line-height:15.39px;color:#1c1c1c;width:31.36px;overflow:hidden;letter-spacing:-0.114px;transform:scaleX(0.877);transform-origin:0 0;">20</div>
<div class="t d" style="left:97.5px;top:478.17px;font-size:15.39px;line-height:15.39px;color:#1c1c1c;width:131.70px;overflow:hidden;letter-spacing:-0.114px;transform:scaleX(0.877);transform-origin:0 0;">û˟êêÈ<i class="b"></i><i class="b"></i>ô<i class="b"></i>6à<i class="b"></i><i class="b"></i>äÄ</div>
<div class="t d" style="left:217.5px;top:478.17px;font-size:15.39px;line-height:15.39px;color:#1c1c1c;width:257.13px;overflow:hidden;letter-spacing:-0.114px;transform:scaleX(0.877);transform-origin:0 0;">12: ????</div>
<div class="t d" style="left:496.5px;top:480.10px;font-size:13.11px;line-height:13.11px;color:#5a5a5a;width:63.28px;overflow:hidden;letter-spacing:0.456px;transform:scaleX(0.877);transform-origin:0 0;">****</div>
<div class="t d" style="left:556.5px;top:480.10px;font-size:13.11px;line-height:13.11px;color:#5a5a5a;width:62.14px;overflow:hidden;letter-spacing:0.456px;transform:scaleX(0.877);transform-origin:0 0;">****</div>
<div class="t d" style="left:615.5px;top:478.17px;font-size:15.39px;line-height:15.39px;color:#1c1c1c;width:123.72px;overflow:hidden;letter-spacing:-0.114px;transform:scaleX(0.877);transform-origin:0 0;">-</div>
<div class="t d" style="left:728.5px;top:478.17px;font-size:15.39px;line-height:15.39px;color:#1c1c1c;width:87.23px;overflow:hidden;letter-spacing:-0.114px;transform:scaleX(0.877);transform-origin:0 0;">-</div>
<div class="t d" style="left:809.5px;top:478.17px;font-size:15.39px;line-height:15.39px;color:#1c1c1c;width:87.23px;overflow:hidden;letter-spacing:-0.114px;transform:scaleX(0.877);transform-origin:0 0;">1÷8,11÷16,20</div>
<div class="t d" style="left:890.5px;top:478.17px;font-size:15.39px;line-height:15.39px;color:#1c1c1c;width:88.37px;overflow:hidden;letter-spacing:-0.114px;transform:scaleX(0.877);transform-origin:0 0;">FE7E39AAF5</div>
<div class="t d" style="left:972.5px;top:478.17px;font-size:15.39px;line-height:15.39px;color:#1c1c1c;width:86.09px;overflow:hidden;letter-spacing:-0.114px;transform:scaleX(0.877);transform-origin:0 0;">C8FFFAAE70</div>
<div class="t d" style="left:3px;top:501.93px;font-size:15.39px;line-height:15.39px;color:#000;letter-spacing:-0.114px;transform:scaleX(0.877);transform-origin:0 0;">22</div>
<div class="t d" style="left:41.5px;top:501.93px;font-size:15.39px;line-height:15.39px;color:#1c1c1c;width:22.23px;overflow:hidden;letter-spacing:-0.114px;transform:scaleX(0.877);transform-origin:0 0;">0</div>
<div class="t d" style="left:65.5px;top:501.93px;font-size:15.39px;line-height:15.39px;color:#1c1c1c;width:31.36px;overflow:hidden;letter-spacing:-0.114px;transform:scaleX(0.877);transform-origin:0 0;">21</div>
<div class="t d" style="left:97.5px;top:501.93px;font-size:15.39px;line-height:15.39px;color:#1c1c1c;width:131.70px;overflow:hidden;letter-spacing:-0.114px;transform:scaleX(0.877);transform-origin:0 0;">¦ª<i class="b"></i>làÚØº »Ï/=</div>
<div class="t d" style="left:217.5px;top:501.93px;font-size:15.39px;line-height:15.39px;color:#1c1c1c;width:257.13px;overflow:hidden;letter-spacing:-0.114px;transform:scaleX(0.877);transform-origin:0 0;">14: ????</div>
<div class="t d" style="left:496.5px;top:503.86px;font-size:13.11px;line-height:13.11px;color:#5a5a5a;width:63.28px;overflow:hidden;letter-spacing:0.456px;transform:scaleX(0.877);transform-origin:0 0;">****</div>
<div class="t d" style="left:556.5px;top:503.86px;font-size:13.11px;line-height:13.11px;color:#5a5a5a;width:62.14px;overflow:hidden;letter-spacing:0.456px;transform:scaleX(0.877);transform-origin:0 0;">****</div>
<div class="t d" style="left:615.5px;top:501.93px;font-size:15.39px;line-height:15.39px;color:#1c1c1c;width:123.72px;overflow:hidden;letter-spacing:-0.114px;transform:scaleX(0.877);transform-origin:0 0;">-</div>
<div class="t d" style="left:728.5px;top:501.93px;font-size:15.39px;line-height:15.39px;color:#1c1c1c;width:87.23px;overflow:hidden;letter-spacing:-0.114px;transform:scaleX(0.877);transform-origin:0 0;">-</div>
<div class="t d" style="left:809.5px;top:501.93px;font-size:15.39px;line-height:15.39px;color:#1c1c1c;width:87.23px;overflow:hidden;letter-spacing:-0.114px;transform:scaleX(0.877);transform-origin:0 0;">2÷3,6,8÷10,1</div>
<div class="t d" style="left:890.5px;top:501.93px;font-size:15.39px;line-height:15.39px;color:#1c1c1c;width:88.37px;overflow:hidden;letter-spacing:-0.114px;transform:scaleX(0.877);transform-origin:0 0;">FF2DB2DA9E</div>
<div class="t d" style="left:972.5px;top:501.93px;font-size:15.39px;line-height:15.39px;color:#1c1c1c;width:86.09px;overflow:hidden;letter-spacing:-0.114px;transform:scaleX(0.877);transform-origin:0 0;">F3ABFFCAA8</div>
<div class="t d" style="left:3px;top:525.69px;font-size:15.39px;line-height:15.39px;color:#000;letter-spacing:-0.114px;transform:scaleX(0.877);transform-origin:0 0;">23</div>
<div class="t d" style="left:41.5px;top:525.69px;font-size:15.39px;line-height:15.39px;color:#1c1c1c;width:22.23px;overflow:hidden;letter-spacing:-0.114px;transform:scaleX(0.877);transform-origin:0 0;">6</div>
<div class="t d" style="left:65.5px;top:525.69px;font-size:15.39px;line-height:15.39px;color:#1c1c1c;width:31.36px;overflow:hidden;letter-spacing:-0.114px;transform:scaleX(0.877);transform-origin:0 0;">22</div>
<div class="t d" style="left:97.5px;top:525.69px;font-size:15.39px;line-height:15.39px;color:#1c1c1c;width:131.70px;overflow:hidden;letter-spacing:-0.114px;transform:scaleX(0.877);transform-origin:0 0;">¸Ïán£º)}Ê<i class="b"></i>¤ÏÍúê´</div>
<div class="t d" style="left:217.5px;top:525.69px;font-size:15.39px;line-height:15.39px;color:#1c1c1c;width:257.13px;overflow:hidden;letter-spacing:-0.114px;transform:scaleX(0.877);transform-origin:0 0;">4: ZWANG</div>
<div class="t d" style="left:496.5px;top:527.62px;font-size:13.11px;line-height:13.11px;color:#5a5a5a;width:63.28px;overflow:hidden;letter-spacing:0.456px;transform:scaleX(0.877);transform-origin:0 0;">****</div>
<div class="t d" style="left:556.5px;top:527.62px;font-size:13.11px;line-height:13.11px;color:#5a5a5a;width:62.14px;overflow:hidden;letter-spacing:0.456px;transform:scaleX(0.877);transform-origin:0 0;">****</div>
<div class="t d" style="left:615.5px;top:525.69px;font-size:15.39px;line-height:15.39px;color:#1c1c1c;width:123.72px;overflow:hidden;letter-spacing:-0.114px;transform:scaleX(0.877);transform-origin:0 0;">-</div>
<div class="t d" style="left:728.5px;top:525.69px;font-size:15.39px;line-height:15.39px;color:#1c1c1c;width:87.23px;overflow:hidden;letter-spacing:-0.114px;transform:scaleX(0.877);transform-origin:0 0;">-</div>
<div class="t d" style="left:809.5px;top:525.69px;font-size:15.39px;line-height:15.39px;color:#1c1c1c;width:87.23px;overflow:hidden;letter-spacing:-0.114px;transform:scaleX(0.877);transform-origin:0 0;">1÷3,5÷6,9÷10</div>
<div class="t d" style="left:890.5px;top:525.69px;font-size:15.39px;line-height:15.39px;color:#1c1c1c;width:88.37px;overflow:hidden;letter-spacing:-0.114px;transform:scaleX(0.877);transform-origin:0 0;">AFE6E9A2E2</div>
<div class="t d" style="left:972.5px;top:525.69px;font-size:15.39px;line-height:15.39px;color:#1c1c1c;width:86.09px;overflow:hidden;letter-spacing:-0.114px;transform:scaleX(0.877);transform-origin:0 0;">0F9EB8F6AA</div>
<div class="t d" style="left:3px;top:549.45px;font-size:15.39px;line-height:15.39px;color:#000;letter-spacing:-0.114px;transform:scaleX(0.877);transform-origin:0 0;">24</div>
<div class="t d" style="left:41.5px;top:549.45px;font-size:15.39px;line-height:15.39px;color:#1c1c1c;width:22.23px;overflow:hidden;letter-spacing:-0.114px;transform:scaleX(0.877);transform-origin:0 0;">0</div>
<div class="t d" style="left:65.5px;top:549.45px;font-size:15.39px;line-height:15.39px;color:#1c1c1c;width:31.36px;overflow:hidden;letter-spacing:-0.114px;transform:scaleX(0.877);transform-origin:0 0;">23</div>
<div class="t d" style="left:97.5px;top:549.45px;font-size:15.39px;line-height:15.39px;color:#1c1c1c;width:131.70px;overflow:hidden;letter-spacing:-0.114px;transform:scaleX(0.877);transform-origin:0 0;">ª<i class="b"></i>¨<i class="b"></i><i class="b"></i>®ÒêÊ¨øªûÁ</div>
<div class="t d" style="left:217.5px;top:549.45px;font-size:15.39px;line-height:15.39px;color:#1c1c1c;width:257.13px;overflow:hidden;letter-spacing:-0.114px;transform:scaleX(0.877);transform-origin:0 0;">9: Wächter</div>
<div class="t d" style="left:496.5px;top:551.38px;font-size:13.11px;line-height:13.11px;color:#5a5a5a;width:63.28px;overflow:hidden;letter-spacing:0.456px;transform:scaleX(0.877);transform-origin:0 0;">****</div>
<div class="t d" style="left:556.5px;top:551.38px;font-size:13.11px;line-height:13.11px;color:#5a5a5a;width:62.14px;overflow:hidden;letter-spacing:0.456px;transform:scaleX(0.877);transform-origin:0 0;">****</div>
<div class="t d" style="left:615.5px;top:549.45px;font-size:15.39px;line-height:15.39px;color:#1c1c1c;width:123.72px;overflow:hidden;letter-spacing:-0.114px;transform:scaleX(0.877);transform-origin:0 0;">-</div>
<div class="t d" style="left:728.5px;top:549.45px;font-size:15.39px;line-height:15.39px;color:#1c1c1c;width:87.23px;overflow:hidden;letter-spacing:-0.114px;transform:scaleX(0.877);transform-origin:0 0;">-</div>
<div class="t d" style="left:809.5px;top:549.45px;font-size:15.39px;line-height:15.39px;color:#1c1c1c;width:87.23px;overflow:hidden;letter-spacing:-0.114px;transform:scaleX(0.877);transform-origin:0 0;">3÷5,8,10÷16,</div>
<div class="t d" style="left:890.5px;top:549.45px;font-size:15.39px;line-height:15.39px;color:#1c1c1c;width:88.37px;overflow:hidden;letter-spacing:-0.114px;transform:scaleX(0.877);transform-origin:0 0;">A2B2F2BF84</div>
<div class="t d" style="left:972.5px;top:549.45px;font-size:15.39px;line-height:15.39px;color:#1c1c1c;width:86.09px;overflow:hidden;letter-spacing:-0.114px;transform:scaleX(0.877);transform-origin:0 0;">CCC6BEB694</div>
<div class="t d" style="left:3px;top:573.21px;font-size:15.39px;line-height:15.39px;color:#000;letter-spacing:-0.114px;transform:scaleX(0.877);transform-origin:0 0;">25</div>
<div class="t d" style="left:41.5px;top:573.21px;font-size:15.39px;line-height:15.39px;color:#1c1c1c;width:22.23px;overflow:hidden;letter-spacing:-0.114px;transform:scaleX(0.877);transform-origin:0 0;">0</div>
<div class="t d" style="left:65.5px;top:573.21px;font-size:15.39px;line-height:15.39px;color:#1c1c1c;width:31.36px;overflow:hidden;letter-spacing:-0.114px;transform:scaleX(0.877);transform-origin:0 0;">24</div>
<div class="t d" style="left:97.5px;top:573.21px;font-size:15.39px;line-height:15.39px;color:#1c1c1c;width:131.70px;overflow:hidden;letter-spacing:-0.114px;transform:scaleX(0.877);transform-origin:0 0;">&#x27;&#x27; î+ïXøÌ2ê´¹ó</div>
<div class="t d" style="left:217.5px;top:573.21px;font-size:15.39px;line-height:15.39px;color:#1c1c1c;width:257.13px;overflow:hidden;letter-spacing:-0.114px;transform:scaleX(0.877);transform-origin:0 0;">9: Wächter</div>
<div class="t d" style="left:496.5px;top:575.14px;font-size:13.11px;line-height:13.11px;color:#5a5a5a;width:63.28px;overflow:hidden;letter-spacing:0.456px;transform:scaleX(0.877);transform-origin:0 0;">****</div>
<div class="t d" style="left:556.5px;top:575.14px;font-size:13.11px;line-height:13.11px;color:#5a5a5a;width:62.14px;overflow:hidden;letter-spacing:0.456px;transform:scaleX(0.877);transform-origin:0 0;">****</div>
<div class="t d" style="left:615.5px;top:573.21px;font-size:15.39px;line-height:15.39px;color:#1c1c1c;width:123.72px;overflow:hidden;letter-spacing:-0.114px;transform:scaleX(0.877);transform-origin:0 0;">-</div>
<div class="t d" style="left:728.5px;top:573.21px;font-size:15.39px;line-height:15.39px;color:#1c1c1c;width:87.23px;overflow:hidden;letter-spacing:-0.114px;transform:scaleX(0.877);transform-origin:0 0;">-</div>
<div class="t d" style="left:809.5px;top:573.21px;font-size:15.39px;line-height:15.39px;color:#1c1c1c;width:87.23px;overflow:hidden;letter-spacing:-0.114px;transform:scaleX(0.877);transform-origin:0 0;">6,8,10÷13,15</div>
<div class="t d" style="left:890.5px;top:573.21px;font-size:15.39px;line-height:15.39px;color:#1c1c1c;width:88.37px;overflow:hidden;letter-spacing:-0.114px;transform:scaleX(0.877);transform-origin:0 0;">BABFFFA642</div>
<div class="t d" style="left:972.5px;top:573.21px;font-size:15.39px;line-height:15.39px;color:#1c1c1c;width:86.09px;overflow:hidden;letter-spacing:-0.114px;transform:scaleX(0.877);transform-origin:0 0;">FAEE4D5DE</div>
<div class="t d" style="left:3px;top:596.97px;font-size:15.39px;line-height:15.39px;color:#000;letter-spacing:-0.114px;transform:scaleX(0.877);transform-origin:0 0;">26</div>
<div class="t d" style="left:41.5px;top:596.97px;font-size:15.39px;line-height:15.39px;color:#1c1c1c;width:22.23px;overflow:hidden;letter-spacing:-0.114px;transform:scaleX(0.877);transform-origin:0 0;">0</div>
<div class="t d" style="left:65.5px;top:596.97px;font-size:15.39px;line-height:15.39px;color:#1c1c1c;width:31.36px;overflow:hidden;letter-spacing:-0.114px;transform:scaleX(0.877);transform-origin:0 0;">25</div>
<div class="t d" style="left:97.5px;top:596.97px;font-size:15.39px;line-height:15.39px;color:#1c1c1c;width:131.70px;overflow:hidden;letter-spacing:-0.114px;transform:scaleX(0.877);transform-origin:0 0;">·ĩÕ¸þ:ì<i class="b"></i>ÙÀÂ;ò</div>
<div class="t d" style="left:217.5px;top:596.97px;font-size:15.39px;line-height:15.39px;color:#1c1c1c;width:257.13px;overflow:hidden;letter-spacing:-0.114px;transform:scaleX(0.877);transform-origin:0 0;">8: Zugriff auf Bankautomat</div>
<div class="t d" style="left:496.5px;top:598.90px;font-size:13.11px;line-height:13.11px;color:#5a5a5a;width:63.28px;overflow:hidden;letter-spacing:0.456px;transform:scaleX(0.877);transform-origin:0 0;">****</div>
<div class="t d" style="left:556.5px;top:598.90px;font-size:13.11px;line-height:13.11px;color:#5a5a5a;width:62.14px;overflow:hidden;letter-spacing:0.456px;transform:scaleX(0.877);transform-origin:0 0;">****</div>
<div class="t d" style="left:615.5px;top:596.97px;font-size:15.39px;line-height:15.39px;color:#1c1c1c;width:123.72px;overflow:hidden;letter-spacing:-0.114px;transform:scaleX(0.877);transform-origin:0 0;">-</div>
<div class="t d" style="left:728.5px;top:596.97px;font-size:15.39px;line-height:15.39px;color:#1c1c1c;width:87.23px;overflow:hidden;letter-spacing:-0.114px;transform:scaleX(0.877);transform-origin:0 0;">-</div>
<div class="t d" style="left:809.5px;top:596.97px;font-size:15.39px;line-height:15.39px;color:#1c1c1c;width:87.23px;overflow:hidden;letter-spacing:-0.114px;transform:scaleX(0.877);transform-origin:0 0;">2,5,8÷10,11</div>
<div class="t d" style="left:890.5px;top:596.97px;font-size:15.39px;line-height:15.39px;color:#1c1c1c;width:88.37px;overflow:hidden;letter-spacing:-0.114px;transform:scaleX(0.877);transform-origin:0 0;">B80ECAFE3A</div>
<div class="t d" style="left:972.5px;top:596.97px;font-size:15.39px;line-height:15.39px;color:#1c1c1c;width:86.09px;overflow:hidden;letter-spacing:-0.114px;transform:scaleX(0.877);transform-origin:0 0;">DAEE4A2D5</div>
</div>
<div style="left:1107px;top:41px;width:80px;height:52px;background:#7c7c7c;"></div>
<div style="left:1109px;top:44px;width:80px;height:47px;background:#ffffff;"></div>
<div style="left:1112px;top:46px;width:80px;height:43px;background:#a2a2a2;"></div>
<div style="left:1113px;top:48px;width:80px;height:41px;background:#efefef;"></div>
<div style="left:1109px;top:89px;width:80px;height:2px;background:#ffffff;"></div>
<div style="left:1107px;top:91px;width:80px;height:2px;background:#9a9a9a;"></div>
<div style="left:1107px;top:93px;width:80px;height:2px;background:#ffffff;"></div>
<div style="left:1108px;top:95px;width:80px;height:368px;background:#ececec;"></div>
<div class="t" style="left:1117.5px;top:99.70px;font-size:15px;line-height:15px;color:#000;transform:scaleX(0.86);transform-origin:0 0;">Information</div>
<div style="left:1111px;top:124px;width:80px;height:2px;background:#ffffff;"></div>
<div style="left:1111px;top:124px;width:4px;height:334px;background:#ffffff;"></div>
<div style="left:1115px;top:126px;width:80px;height:332px;background:#efefef;"></div>
<div style="left:1122px;top:135px;width:80px;height:318px;background:#a3a3a3;"></div>
<div style="left:1126px;top:139px;width:80px;height:314px;background:#efefef;"></div>
<div style="left:1115px;top:453px;width:80px;height:5px;background:#ffffff;"></div>
<div style="left:1112px;top:463px;width:80px;height:4px;background:#a2a2a2;"></div>
<div style="left:1112px;top:467px;width:80px;height:3px;background:#ffffff;"></div>
<div style="left:1112px;top:470px;width:80px;height:2px;background:#b0b0b0;"></div>
<div style="left:1112px;top:472px;width:80px;height:2px;background:#ffffff;"></div>
<div style="left:1112px;top:474px;width:80px;height:2px;background:#6e6e6e;"></div>
<div style="left:1112px;top:474px;width:2px;height:212px;background:#6e6e6e;"></div>
<div style="left:1114px;top:476px;width:80px;height:208px;background:#ffffff;"></div>
<div style="left:1114px;top:684px;width:80px;height:5px;background:#f6f6f6;"></div>
<div style="left:1107px;top:689px;width:80px;height:3px;background:#7a7a7a;"></div>
<div style="left:9px;top:698px;width:180px;height:30px;background:#f0f0f0;border-top:1px solid #fff;border-left:1px solid #fff;border-right:2px solid #7a7a7a;border-bottom:2px solid #7a7a7a;"></div>

<div style="left:195px;top:698px;width:180px;height:30px;background:#f0f0f0;border-top:1px solid #fff;border-left:1px solid #fff;border-right:2px solid #7a7a7a;border-bottom:2px solid #7a7a7a;"></div>

<div style="left:382px;top:698px;width:92px;height:30px;background:#f0f0f0;border-top:1px solid #fff;border-left:1px solid #fff;border-right:2px solid #7a7a7a;border-bottom:2px solid #7a7a7a;"></div>

<div style="left:9px;top:734px;width:180px;height:31px;background:#f0f0f0;border-top:1px solid #fff;border-left:1px solid #fff;border-right:2px solid #7a7a7a;border-bottom:2px solid #7a7a7a;"></div>

<div style="left:195px;top:734px;width:180px;height:31px;background:#f0f0f0;border-top:1px solid #fff;border-left:1px solid #fff;border-right:2px solid #7a7a7a;border-bottom:2px solid #7a7a7a;"></div>

<div style="left:382px;top:734px;width:91px;height:29px;background:#f0f0f0;border:2px solid #6a6a6a;border-right:2px solid #5e5e5e;border-bottom:3px solid #666;"></div>

<div style="left:387px;top:739px;width:84px;height:22px;border:1px dotted #333;"></div>
<svg style="position:absolute;left:23px;top:705px" width="8" height="22" viewBox="0 0 8 22">
<defs><linearGradient id="cg23" x1="0" x2="1" y1="0" y2="0"><stop offset="0" stop-color="#3ef0f0"/><stop offset="0.55" stop-color="#18c8cc"/><stop offset="1" stop-color="#0a5a60"/></linearGradient></defs>
<path d="M1 1 L7 1 L6.2 15 L2 15 Z" fill="url(#cg23)"/>
<path d="M6.2 1 L7 1 L6.2 15 L5.2 15 Z" fill="#0c3c40"/>
<ellipse cx="4" cy="18.8" rx="2.8" ry="2.2" fill="#0e6a70"/>
<ellipse cx="3.4" cy="18.2" rx="1.6" ry="1.1" fill="#30e0e0"/>
</svg>
<svg style="position:absolute;left:220px;top:705px" width="8" height="22" viewBox="0 0 8 22">
<defs><linearGradient id="cg220" x1="0" x2="1" y1="0" y2="0"><stop offset="0" stop-color="#3ef0f0"/><stop offset="0.55" stop-color="#18c8cc"/><stop offset="1" stop-color="#0a5a60"/></linearGradient></defs>
<path d="M1 1 L7 1 L6.2 15 L2 15 Z" fill="url(#cg220)"/>
<path d="M6.2 1 L7 1 L6.2 15 L5.2 15 Z" fill="#0c3c40"/>
<ellipse cx="4" cy="18.8" rx="2.8" ry="2.2" fill="#0e6a70"/>
<ellipse cx="3.4" cy="18.2" rx="1.6" ry="1.1" fill="#30e0e0"/>
</svg>
<div class="t" style="left:43px;top:707.50px;font-size:15px;line-height:15px;color:#000;letter-spacing:0px;transform:scaleX(0.87);transform-origin:0 0;">Administrator hinzufügen</div>
<div class="t" style="left:241px;top:707.50px;font-size:15px;line-height:15px;color:#000;letter-spacing:0px;transform:scaleX(0.87);transform-origin:0 0;">Benutzer hinzufügen</div>
<svg style="position:absolute;left:402px;top:709px" width="20" height="14" viewBox="0 0 20 14">
<rect x="0" y="0.5" width="20" height="13" rx="1.2" fill="#3a10b8"/>
<rect x="1" y="0" width="18" height="14" fill="#1c1c50"/>
<rect x="1.2" y="1" width="17.6" height="4" fill="#f6ee10"/>
<rect x="1.2" y="5" width="17.6" height="4.6" fill="#c02aa0"/>
<rect x="1.2" y="9.6" width="17.6" height="3.4" fill="#eeea30"/>
</svg>
<div class="t" style="left:428px;top:707.50px;font-size:15px;line-height:15px;color:#000;letter-spacing:0px;transform:scaleX(0.87);transform-origin:0 0;">Karte</div>
<svg style="position:absolute;left:63px;top:742px" width="18" height="17" viewBox="0 0 18 17">
<polygon points="0.8,2.5 3.5,0.6 17,15.2 16.2,16" fill="#000"/>
<polygon points="16.6,0.8 17.3,1.6 4.5,15.8 1.8,13.8" fill="#000"/>
<circle cx="3.1" cy="14.8" r="1.7" fill="#000"/>
<circle cx="2.1" cy="1.6" r="1.5" fill="#000"/>
</svg>
<div class="t" style="left:88px;top:743.70px;font-size:15px;line-height:15px;color:#000;letter-spacing:0px;transform:scaleX(0.87);transform-origin:0 0;"><u>L</u>öschen</div>
<svg style="position:absolute;left:227px;top:744px" width="18" height="13" viewBox="0 0 18 13">
<path d="M4 7.5 Q7.5 2.2 12 2.8 Q16.8 4 13.8 11" stroke="#1010a0" stroke-width="1.7" fill="none"/>
<polygon points="1,3.6 1,10 7.4,10" fill="#0000c0"/>
</svg>
<div class="t" style="left:251px;top:743.70px;font-size:15px;line-height:15px;color:#000;letter-spacing:0px;transform:scaleX(0.87);transform-origin:0 0;">Wiederherstellen</div>
<svg style="position:absolute;left:399px;top:741px" width="21" height="21" viewBox="0 0 21 21">
<circle cx="10" cy="10.3" r="9.8" fill="#3a3a3a"/>
<circle cx="10" cy="10.3" r="8.6" fill="#b8b4a8"/>
<circle cx="10" cy="10.3" r="7.6" fill="#151515"/>
<circle cx="10" cy="10.3" r="6.5" fill="#f2f200"/>
<path d="M7.2 6.2 L10.8 6.2 Q13 6.6 13 10.3 Q13 14 10.8 14.4 L7.2 14.4 Z" fill="#111"/>
<path d="M8.9 8 L10.3 8 Q11.2 8.4 11.2 10.3 Q11.2 12.2 10.3 12.6 L8.9 12.6 Z" fill="#f2f200"/>
</svg>
<div class="t" style="left:425px;top:743.70px;font-size:15px;line-height:15px;color:#000;letter-spacing:0px;transform:scaleX(0.87);transform-origin:0 0;">Dallas</div>
<div style="left:487px;top:698px;width:1px;height:70px;background:#a0a0a0;"></div>
<div style="left:488px;top:698px;width:1px;height:70px;background:#ffffff;"></div>
<div style="left:499px;top:698px;width:217px;height:32px;border-top:1px solid #a0a0a0;border-left:1px solid #a0a0a0;border-right:1px solid #fff;border-bottom:1px solid #fff;"></div>
<div style="left:505px;top:707px;width:13px;height:13px;background:#fff;border-top:2px solid #808080;border-left:2px solid #808080;border-right:1px solid #f0f0f0;border-bottom:1px solid #f0f0f0;"></div>
<div class="t" style="left:528px;top:706.30px;font-size:15px;line-height:15px;color:#000;letter-spacing:0px;transform:scaleX(0.87);transform-origin:0 0;">Kennwörter zeigen</div>
<div style="left:499px;top:735px;width:117px;height:31px;background:#f0f0f0;border-top:1px solid #fff;border-left:1px solid #fff;border-right:2px solid #7a7a7a;border-bottom:2px solid #7a7a7a;"></div>

<div style="left:625px;top:736px;width:91px;height:29px;background:#f0f0f0;border-top:1px solid #fff;border-left:1px solid #fff;border-right:2px solid #7a7a7a;border-bottom:2px solid #7a7a7a;"></div>

<svg style="position:absolute;left:521px;top:744px" width="22" height="20" viewBox="0 0 22 20">
<rect x="7" y="1" width="11.5" height="2.2" rx="0.8" fill="#1e1e1e"/>
<polygon points="6.2,3 17.5,3 16.5,9.2 4.2,9.2" fill="#eaeaf8" stroke="#222" stroke-width="0.6"/>
<rect x="7.4" y="4" width="7" height="1.3" rx="0.6" fill="#3030d8"/>
<rect x="6.4" y="6.3" width="6" height="1.9" fill="#5a5ae8"/>
<polygon points="17.6,9 20.8,11 20.8,17.5 17.6,19" fill="#3a3a3a"/>
<path d="M1.6 9.4 L18 9.4 L18 17.8 Q18 19 16.8 19 L3 19 Q1.6 19 1.6 17.6 Z" fill="#1a1a1a"/>
<rect x="2.6" y="10.8" width="14.4" height="1.6" fill="#9a9a9a"/>
<rect x="2.6" y="13.6" width="14.4" height="1.8" fill="#d4d4d4"/>
<rect x="3" y="16.6" width="13" height="1.2" fill="#8a8a8a"/>
<ellipse cx="11.6" cy="13" rx="2.6" ry="1.5" fill="#c00018"/>
</svg>
<div class="t" style="left:548px;top:744.80px;font-size:15px;line-height:15px;color:#000;letter-spacing:0px;transform:scaleX(0.87);transform-origin:0 0;">Drucken</div>
<div class="t" style="left:655px;top:744.80px;font-size:15px;line-height:15px;color:#000;letter-spacing:0px;transform:scaleX(0.87);transform-origin:0 0;">Export</div>
<div style="left:3px;top:773px;width:1180px;height:1px;background:#a0a0a0;"></div>
<div style="left:3px;top:774px;width:1180px;height:3px;background:#ffffff;"></div>
<div style="left:3px;top:777px;width:1180px;height:1px;background:#a9a9a9;"></div>
<div class="t" style="left:6px;top:780.24px;font-size:14.6px;line-height:14.6px;color:#000;">Service kann die Bntz. in folgenden Partitionen bearbeiten: 1</div>
</body></html>
